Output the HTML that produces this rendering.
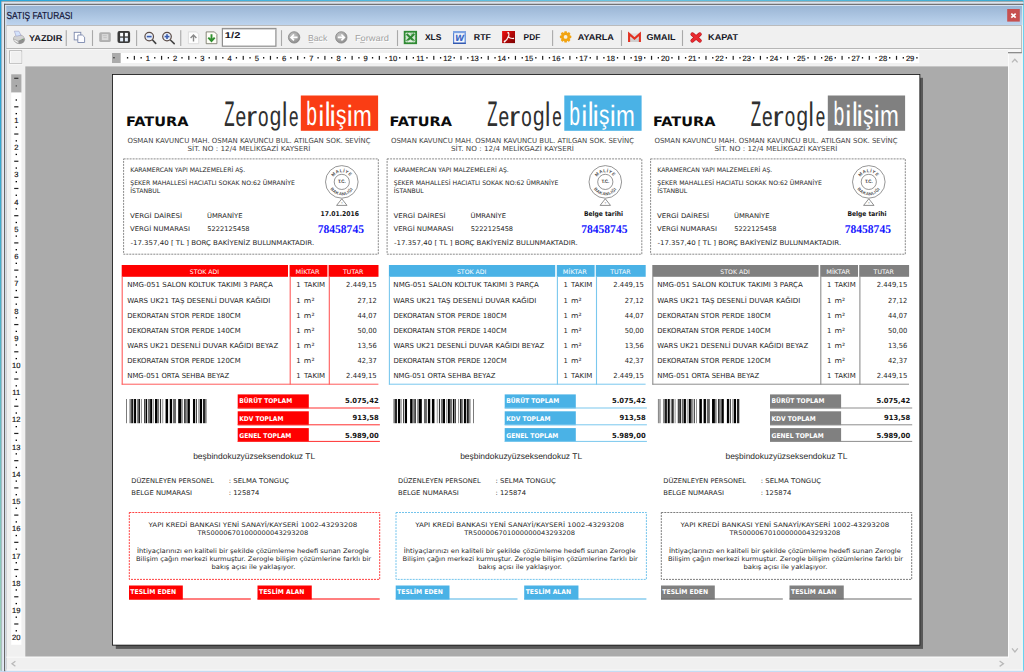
<!DOCTYPE html>
<html lang="tr"><head><meta charset="utf-8"><title>SATIŞ FATURASI</title>
<style>html,body{margin:0;padding:0;background:#f0f0f0;overflow:hidden}body{width:1024px;height:672px}svg text{white-space:pre;text-rendering:geometricPrecision}</style>
</head><body>
<svg width="1024" height="672" viewBox="0 0 1024 672" style="display:block">
<defs>
<linearGradient id="gt" x1="0" y1="0" x2="0" y2="1"><stop offset="0" stop-color="#9ab5d4"/><stop offset="1" stop-color="#bdd4ee"/></linearGradient>
<linearGradient id="gl" x1="0" y1="0" x2="0" y2="1"><stop offset="0" stop-color="#1e9fd8"/><stop offset="0.5" stop-color="#4fb3c8"/><stop offset="1" stop-color="#a6d4b6"/></linearGradient>
<linearGradient id="gtop" x1="0" y1="0" x2="1" y2="0"><stop offset="0" stop-color="#2aa6da"/><stop offset="0.6" stop-color="#6cc4e0"/><stop offset="1" stop-color="#3aa8d0"/></linearGradient>
<radialGradient id="gnav" cx="0.4" cy="0.35" r="0.7"><stop offset="0" stop-color="#c8c8c8"/><stop offset="1" stop-color="#8a8a8a"/></radialGradient>
<linearGradient id="gpdf" x1="0" y1="0" x2="1" y2="1"><stop offset="0" stop-color="#f01010"/><stop offset="1" stop-color="#7a0000"/></linearGradient>
</defs>
<rect x="0.00" y="0.00" width="1024.00" height="672.00" fill="#f0f0f0" />
<rect x="0.00" y="0.00" width="1024.00" height="1.40" fill="url(#gtop)" />
<rect x="0.00" y="0.00" width="1.60" height="672.00" fill="url(#gl)" />
<rect x="1022.80" y="0.00" width="1.20" height="672.00" fill="#68d2ef" />
<rect x="0.00" y="670.50" width="1024.00" height="1.50" fill="#c4dcf4" />
<rect x="1.60" y="1.30" width="1021.80" height="0.80" fill="#9a9a9a" />
<rect x="1.60" y="2.10" width="1021.80" height="1.70" fill="#dbe4ef" />
<rect x="1.60" y="2.10" width="2.60" height="668.90" fill="#e3eaf4" />
<rect x="4.10" y="3.80" width="1019.30" height="1.10" fill="#565656" />
<rect x="4.10" y="3.80" width="1.20" height="667.40" fill="#565656" />
<rect x="5.30" y="4.90" width="1017.30" height="1.10" fill="#e4edf8" />
<rect x="5.30" y="4.90" width="1.10" height="665.60" fill="#dde8f6" />
<rect x="6.40" y="25.80" width="0.60" height="644.70" fill="#c4c4c4" />
<rect x="1.50" y="1.30" width="0.60" height="669.70" fill="#8f9aa6" />
<rect x="6.20" y="5.80" width="1015.80" height="19.40" fill="url(#gt)" />
<rect x="6.20" y="25.00" width="1015.80" height="0.80" fill="#b0b0b0" />
<text x="6.54" y="18.90" font-size="10.2" fill="#14173a" font-family="Liberation Sans, sans-serif" font-weight="normal" textLength="66.13" lengthAdjust="spacingAndGlyphs" stroke="#14173a" stroke-width="0.2">SATIŞ FATURASI</text>
<rect x="1007.20" y="9.00" width="12.60" height="12.60" fill="#c75050" />
<path d="M1011.3 13.6 L1015.7 17.6 M1015.7 13.6 L1011.3 17.6" stroke="#fff" stroke-width="1.7" fill="none"/>
<rect x="6.30" y="48.00" width="1015.50" height="0.90" fill="#a6a6a6" />
<rect x="6.30" y="48.90" width="1001.70" height="0.80" fill="#fbfbfb" />
<rect x="1021.00" y="25.80" width="0.90" height="27.20" fill="#a6a6a6" />
<rect x="65.70" y="30.20" width="1.10" height="15.80" fill="#a9a9a9" />
<rect x="91.95" y="30.20" width="1.10" height="15.80" fill="#a9a9a9" />
<rect x="136.05" y="30.20" width="1.10" height="15.80" fill="#a9a9a9" />
<rect x="180.20" y="30.20" width="1.10" height="15.80" fill="#a9a9a9" />
<rect x="280.95" y="30.20" width="1.10" height="15.80" fill="#a9a9a9" />
<rect x="396.95" y="30.20" width="1.10" height="15.80" fill="#a9a9a9" />
<rect x="552.05" y="30.20" width="1.10" height="15.80" fill="#a9a9a9" />
<rect x="620.95" y="30.20" width="1.10" height="15.80" fill="#a9a9a9" />
<rect x="681.95" y="30.20" width="1.10" height="15.80" fill="#a9a9a9" />
<text x="29.06" y="40.90" font-size="8.5" fill="#15151f" font-family="Liberation Sans, sans-serif" font-weight="bold" textLength="33.20" lengthAdjust="spacingAndGlyphs" >YAZDIR</text>
<text x="308.76" y="41.90" font-size="8.6" fill="#ffffff" font-family="Liberation Sans, sans-serif" font-weight="normal" textLength="19.27" lengthAdjust="spacingAndGlyphs" >Back</text>
<text x="307.96" y="41.10" font-size="8.6" fill="#a2a2a2" font-family="Liberation Sans, sans-serif" font-weight="normal" textLength="19.27" lengthAdjust="spacingAndGlyphs" >Back</text>
<text x="355.76" y="41.90" font-size="8.6" fill="#ffffff" font-family="Liberation Sans, sans-serif" font-weight="normal" textLength="34.02" lengthAdjust="spacingAndGlyphs" >Forward</text>
<text x="354.96" y="41.10" font-size="8.6" fill="#a2a2a2" font-family="Liberation Sans, sans-serif" font-weight="normal" textLength="34.02" lengthAdjust="spacingAndGlyphs" >Forward</text>
<rect x="308.80" y="42.20" width="4.40" height="0.70" fill="#a8a8a8" />
<rect x="360.00" y="42.20" width="4.60" height="0.70" fill="#a8a8a8" />
<text x="424.96" y="40.00" font-size="8.5" fill="#15151f" font-family="Liberation Sans, sans-serif" font-weight="bold" textLength="16.50" lengthAdjust="spacingAndGlyphs" >XLS</text>
<text x="473.86" y="40.00" font-size="8.5" fill="#15151f" font-family="Liberation Sans, sans-serif" font-weight="bold" textLength="17.10" lengthAdjust="spacingAndGlyphs" >RTF</text>
<text x="523.61" y="40.00" font-size="8.5" fill="#15151f" font-family="Liberation Sans, sans-serif" font-weight="bold" textLength="16.61" lengthAdjust="spacingAndGlyphs" >PDF</text>
<text x="577.76" y="40.00" font-size="8.5" fill="#15151f" font-family="Liberation Sans, sans-serif" font-weight="bold" textLength="36.11" lengthAdjust="spacingAndGlyphs" >AYARLA</text>
<text x="646.61" y="40.00" font-size="8.5" fill="#15151f" font-family="Liberation Sans, sans-serif" font-weight="bold" textLength="28.86" lengthAdjust="spacingAndGlyphs" >GMAIL</text>
<text x="708.11" y="40.00" font-size="8.5" fill="#15151f" font-family="Liberation Sans, sans-serif" font-weight="bold" textLength="29.86" lengthAdjust="spacingAndGlyphs" >KAPAT</text>
<g id="icons">
<!-- printer -->
<path d="M13.4 39 Q13.3 36.6 16.2 35.6 L21 35 Q24.4 36.4 24.7 39.4 Q24.8 42 22 43.2 Q19 44.2 16.8 43.2 Q13.6 41.8 13.4 39 Z" fill="#b2b2b2" stroke="#8e8e8e" stroke-width="0.5"/>
<path d="M13.6 38.6 Q14 36.4 16.4 35.7 L20.8 35.2 Q23.6 36.2 24.2 38.2 L18.6 40.8 Z" fill="#d2d2d2"/>
<path d="M18.6 40.8 L24.2 38.2 Q25 41.4 22 43.1 Q20 43.9 18.6 43.6 Z" fill="#8f8f8f"/>
<path d="M14.2 39.6 L18.2 41.9 L18.2 43 L14.6 41 Z" fill="#f6f6f6"/>
<path d="M14.3 31.2 L18.9 31.2 L21 35.3 L16.2 36.2 Z" fill="#d3e2fb" stroke="#9c9cc4" stroke-width="0.55"/>
<rect x="21.9" y="38.9" width="0.9" height="0.9" fill="#58b04c"/>
<!-- copy -->
<rect x="74.2" y="32.3" width="6.6" height="7.6" fill="#fff" stroke="#7b88ad" stroke-width="0.9"/>
<path d="M77.8 35 L82.4 35 L84.6 37.2 L84.6 42.5 L77.8 42.5 Z" fill="#fcfcff" stroke="#7b88ad" stroke-width="0.9"/>
<!-- gray page -->
<rect x="99.2" y="32.2" width="11.6" height="9.9" rx="1.6" fill="#b0b0b0"/>
<rect x="101.8" y="34.1" width="6.6" height="6" fill="#dadada"/>
<rect x="102.6" y="35.4" width="4.2" height="0.7" fill="#b8b8b8"/><rect x="103.4" y="37.4" width="3.4" height="0.7" fill="#b8b8b8"/>
<!-- grid -->
<rect x="117.5" y="31.1" width="12.6" height="11.9" rx="1.9" fill="#3a3a3a"/>
<rect x="120.1" y="32.9" width="3" height="3.5" fill="#fbfdff"/><rect x="124.9" y="32.9" width="3" height="3.5" fill="#fbfdff"/>
<rect x="120.1" y="37.7" width="3" height="3.7" fill="#e4eefa"/><rect x="124.9" y="37.7" width="3" height="3.7" fill="#e4eefa"/>
<!-- zoom out -->
<path d="M152.6 40 L155.7 43.4" stroke="#444" stroke-width="1.6" stroke-linecap="round"/>
<circle cx="149.2" cy="36.6" r="4.3" fill="#e6eefa" stroke="#5c4c46" stroke-width="1.2"/>
<rect x="146.8" y="35.8" width="4.8" height="1.6" fill="#3a5cae"/>
<!-- zoom in -->
<path d="M170.4 40 L174.2 43.6" stroke="#444" stroke-width="1.6" stroke-linecap="round"/>
<circle cx="167" cy="36.6" r="4.3" fill="#e6eefa" stroke="#5c4c46" stroke-width="1.2"/>
<rect x="164.6" y="35.8" width="4.8" height="1.6" fill="#3a5cae"/><rect x="166.2" y="34.2" width="1.6" height="4.8" fill="#3a5cae"/>
<!-- page up -->
<path d="M188.4 31.9 L196.4 31.9 L198.7 34.2 L198.7 43.7 L188.4 43.7 Z" fill="#fdfdfd" stroke="#d2d2d2" stroke-width="0.7"/>
<path d="M193.5 41.6 L193.5 35.2 M190.6 38 L193.5 35 L196.4 38" fill="none" stroke="#8a8a8a" stroke-width="1.4"/>
<!-- page down -->
<path d="M206.2 31.9 L214.4 31.9 L216.9 34.4 L216.9 43.7 L206.2 43.7 Z" fill="#fdfdf6" stroke="#6d6d5e" stroke-width="0.8"/>
<path d="M211.5 34.3 L211.5 40.6 M208.3 37.6 L211.5 41 L214.7 37.6" fill="none" stroke="#2f8f2f" stroke-width="1.9"/>
<!-- back / forward -->
<circle cx="294.1" cy="37.4" r="5.7" fill="url(#gnav)" stroke="#858585" stroke-width="0.8"/>
<path d="M297.6 37.4 L291.2 37.4 M294 34.5 L291 37.4 L294 40.3" fill="none" stroke="#fff" stroke-width="1.6"/>
<circle cx="341.3" cy="37.4" r="5.7" fill="url(#gnav)" stroke="#858585" stroke-width="0.8"/>
<path d="M337.8 37.4 L344.2 37.4 M341.4 34.5 L344.4 37.4 L341.4 40.3" fill="none" stroke="#fff" stroke-width="1.6"/>
<!-- excel -->
<rect x="404.7" y="31.8" width="11.4" height="11.4" fill="#cfe5cf" stroke="#2f8a33" stroke-width="1.9"/>
<rect x="405.9" y="33" width="9" height="9" fill="none" stroke="#e8f3e8" stroke-width="0.6" stroke-dasharray="0.8 0.8"/>
<path d="M406.6 34 L414.2 41.2 M414.2 34 L406.6 41.2" stroke="#2f8a33" stroke-width="2.1"/>
<rect x="410.8" y="33.6" width="4" height="1.1" fill="#2f8a33" opacity=".55"/><rect x="406.4" y="40.6" width="8" height="1.1" fill="#eaf4ea" opacity=".9"/>
<!-- word -->
<rect x="453.6" y="31.6" width="11.6" height="11.8" fill="#f4f7fd" stroke="#5a86d6" stroke-width="1.2"/>
<rect x="453" y="31" width="12.8" height="2.2" fill="#7ea3e2"/>
<rect x="453" y="42.6" width="12.8" height="1.3" fill="#2f55ad"/>
<text x="459.6" y="41.3" font-size="8.6" font-style="italic" font-weight="bold" fill="#3d68c4" font-family="DejaVu Sans, Liberation Sans, sans-serif" text-anchor="middle" textLength="9.2" lengthAdjust="spacingAndGlyphs">W</text>
<!-- pdf -->
<rect x="502.1" y="31" width="12.9" height="12.1" fill="url(#gpdf)"/>
<path d="M508.2 32.6 Q509.4 33.4 508.6 36 Q507.6 39.4 504.4 41.8 M508.4 36.6 Q510 39 513.6 38.4" fill="none" stroke="#fff" stroke-width="1.15" stroke-linecap="round" opacity=".92"/>
<circle cx="504.6" cy="41.4" r="0.9" fill="#fff" opacity=".85"/>
<circle cx="508.1" cy="32.9" r="0.8" fill="#fff" opacity=".8"/>
<circle cx="513.2" cy="38.5" r="0.8" fill="#fff" opacity=".8"/>
<!-- gear -->
<g transform="translate(565.6 36.9)">
<circle r="4.5" fill="#f2a412"/>
<g fill="#f2a412"><rect x="-1.3" y="-5.7" width="2.6" height="11.4" rx="0.6"/><rect x="-1.3" y="-5.7" width="2.6" height="11.4" rx="0.6" transform="rotate(45)"/><rect x="-1.3" y="-5.7" width="2.6" height="11.4" rx="0.6" transform="rotate(90)"/><rect x="-1.3" y="-5.7" width="2.6" height="11.4" rx="0.6" transform="rotate(135)"/></g>
<circle r="1.9" fill="#f6efe0"/>
</g>
<!-- gmail -->
<rect x="628.6" y="33.4" width="11.8" height="8.6" fill="#dedede"/>
<rect x="629.6" y="38.5" width="9.8" height="3.5" fill="#cfcfcf"/>
<path d="M629.1 42 L629.1 33.9 L634.5 38.6 L639.9 33.9 L639.9 42" fill="none" stroke="#e23222" stroke-width="2.1" stroke-linejoin="miter"/>
<!-- red X -->
<path d="M692.4 34.2 L699.8 40.6 M699.8 34.2 L692.4 40.6" stroke="#b3181e" stroke-width="3.9" stroke-linecap="round"/>
<path d="M692.4 34.2 L699.8 40.6 M699.8 34.2 L692.4 40.6" stroke="#ea2a30" stroke-width="2.8" stroke-linecap="round"/>
</g>

<rect x="222.40" y="28.50" width="53.50" height="17.70" fill="#ffffff" stroke="#8f8f8f" stroke-width="1.2"/>
<rect x="222.90" y="28.90" width="52.50" height="0.80" fill="#c9c9c9" />
<text x="224.86" y="38.30" font-size="8.5" fill="#15151f" font-family="Liberation Sans, sans-serif" font-weight="bold" textLength="15.50" lengthAdjust="spacingAndGlyphs" >1/2</text>
<rect x="9.10" y="50.30" width="13.00" height="13.50" fill="#adadad" />
<rect x="9.90" y="51.10" width="11.50" height="11.90" fill="#fdfdfd" />
<rect x="10.70" y="51.90" width="10.70" height="11.10" fill="#f0f0f0" />
<rect x="9.10" y="63.80" width="13.50" height="0.80" fill="#fbfbfb" />
<rect x="112.00" y="53.00" width="8.80" height="10.00" fill="#ababab" />
<rect x="120.80" y="53.00" width="798.40" height="10.00" fill="#ffffff" />
<rect x="113.00" y="57.20" width="1.90" height="1.10" fill="#444" />
<rect x="126.91" y="57.10" width="1.30" height="1.40" fill="#000" />
<rect x="133.76" y="55.90" width="1.20" height="3.90" fill="#222" />
<rect x="140.51" y="57.10" width="1.30" height="1.40" fill="#000" />
<text x="147.97" y="60.7" font-size="7.6" fill="#101010" stroke="#101010" stroke-width="0.15" font-family="Liberation Sans, sans-serif" text-anchor="middle">1</text>
<rect x="154.12" y="57.10" width="1.30" height="1.40" fill="#000" />
<rect x="160.98" y="55.90" width="1.20" height="3.90" fill="#222" />
<rect x="167.73" y="57.10" width="1.30" height="1.40" fill="#000" />
<text x="175.19" y="60.7" font-size="7.6" fill="#101010" stroke="#101010" stroke-width="0.15" font-family="Liberation Sans, sans-serif" text-anchor="middle">2</text>
<rect x="181.34" y="57.10" width="1.30" height="1.40" fill="#000" />
<rect x="188.20" y="55.90" width="1.20" height="3.90" fill="#222" />
<rect x="194.95" y="57.10" width="1.30" height="1.40" fill="#000" />
<text x="202.41" y="60.7" font-size="7.6" fill="#101010" stroke="#101010" stroke-width="0.15" font-family="Liberation Sans, sans-serif" text-anchor="middle">3</text>
<rect x="208.56" y="57.10" width="1.30" height="1.40" fill="#000" />
<rect x="215.42" y="55.90" width="1.20" height="3.90" fill="#222" />
<rect x="222.17" y="57.10" width="1.30" height="1.40" fill="#000" />
<text x="229.63" y="60.7" font-size="7.6" fill="#101010" stroke="#101010" stroke-width="0.15" font-family="Liberation Sans, sans-serif" text-anchor="middle">4</text>
<rect x="235.78" y="57.10" width="1.30" height="1.40" fill="#000" />
<rect x="242.64" y="55.90" width="1.20" height="3.90" fill="#222" />
<rect x="249.39" y="57.10" width="1.30" height="1.40" fill="#000" />
<text x="256.85" y="60.7" font-size="7.6" fill="#101010" stroke="#101010" stroke-width="0.15" font-family="Liberation Sans, sans-serif" text-anchor="middle">5</text>
<rect x="263.01" y="57.10" width="1.30" height="1.40" fill="#000" />
<rect x="269.86" y="55.90" width="1.20" height="3.90" fill="#222" />
<rect x="276.62" y="57.10" width="1.30" height="1.40" fill="#000" />
<text x="284.07" y="60.7" font-size="7.6" fill="#101010" stroke="#101010" stroke-width="0.15" font-family="Liberation Sans, sans-serif" text-anchor="middle">6</text>
<rect x="290.23" y="57.10" width="1.30" height="1.40" fill="#000" />
<rect x="297.08" y="55.90" width="1.20" height="3.90" fill="#222" />
<rect x="303.84" y="57.10" width="1.30" height="1.40" fill="#000" />
<text x="311.29" y="60.7" font-size="7.6" fill="#101010" stroke="#101010" stroke-width="0.15" font-family="Liberation Sans, sans-serif" text-anchor="middle">7</text>
<rect x="317.44" y="57.10" width="1.30" height="1.40" fill="#000" />
<rect x="324.30" y="55.90" width="1.20" height="3.90" fill="#222" />
<rect x="331.06" y="57.10" width="1.30" height="1.40" fill="#000" />
<text x="338.51" y="60.7" font-size="7.6" fill="#101010" stroke="#101010" stroke-width="0.15" font-family="Liberation Sans, sans-serif" text-anchor="middle">8</text>
<rect x="344.67" y="57.10" width="1.30" height="1.40" fill="#000" />
<rect x="351.52" y="55.90" width="1.20" height="3.90" fill="#222" />
<rect x="358.28" y="57.10" width="1.30" height="1.40" fill="#000" />
<text x="365.73" y="60.7" font-size="7.6" fill="#101010" stroke="#101010" stroke-width="0.15" font-family="Liberation Sans, sans-serif" text-anchor="middle">9</text>
<rect x="371.89" y="57.10" width="1.30" height="1.40" fill="#000" />
<rect x="378.74" y="55.90" width="1.20" height="3.90" fill="#222" />
<rect x="385.50" y="57.10" width="1.30" height="1.40" fill="#000" />
<text x="392.95" y="60.7" font-size="7.6" fill="#101010" stroke="#101010" stroke-width="0.15" font-family="Liberation Sans, sans-serif" text-anchor="middle">10</text>
<rect x="399.11" y="57.10" width="1.30" height="1.40" fill="#000" />
<rect x="405.96" y="55.90" width="1.20" height="3.90" fill="#222" />
<rect x="412.72" y="57.10" width="1.30" height="1.40" fill="#000" />
<text x="420.17" y="60.7" font-size="7.6" fill="#101010" stroke="#101010" stroke-width="0.15" font-family="Liberation Sans, sans-serif" text-anchor="middle">11</text>
<rect x="426.32" y="57.10" width="1.30" height="1.40" fill="#000" />
<rect x="433.18" y="55.90" width="1.20" height="3.90" fill="#222" />
<rect x="439.94" y="57.10" width="1.30" height="1.40" fill="#000" />
<text x="447.39" y="60.7" font-size="7.6" fill="#101010" stroke="#101010" stroke-width="0.15" font-family="Liberation Sans, sans-serif" text-anchor="middle">12</text>
<rect x="453.55" y="57.10" width="1.30" height="1.40" fill="#000" />
<rect x="460.40" y="55.90" width="1.20" height="3.90" fill="#222" />
<rect x="467.16" y="57.10" width="1.30" height="1.40" fill="#000" />
<text x="474.61" y="60.7" font-size="7.6" fill="#101010" stroke="#101010" stroke-width="0.15" font-family="Liberation Sans, sans-serif" text-anchor="middle">13</text>
<rect x="480.77" y="57.10" width="1.30" height="1.40" fill="#000" />
<rect x="487.62" y="55.90" width="1.20" height="3.90" fill="#222" />
<rect x="494.38" y="57.10" width="1.30" height="1.40" fill="#000" />
<text x="501.83" y="60.7" font-size="7.6" fill="#101010" stroke="#101010" stroke-width="0.15" font-family="Liberation Sans, sans-serif" text-anchor="middle">14</text>
<rect x="507.99" y="57.10" width="1.30" height="1.40" fill="#000" />
<rect x="514.84" y="55.90" width="1.20" height="3.90" fill="#222" />
<rect x="521.60" y="57.10" width="1.30" height="1.40" fill="#000" />
<text x="529.05" y="60.7" font-size="7.6" fill="#101010" stroke="#101010" stroke-width="0.15" font-family="Liberation Sans, sans-serif" text-anchor="middle">15</text>
<rect x="535.20" y="57.10" width="1.30" height="1.40" fill="#000" />
<rect x="542.06" y="55.90" width="1.20" height="3.90" fill="#222" />
<rect x="548.81" y="57.10" width="1.30" height="1.40" fill="#000" />
<text x="556.27" y="60.7" font-size="7.6" fill="#101010" stroke="#101010" stroke-width="0.15" font-family="Liberation Sans, sans-serif" text-anchor="middle">16</text>
<rect x="562.42" y="57.10" width="1.30" height="1.40" fill="#000" />
<rect x="569.28" y="55.90" width="1.20" height="3.90" fill="#222" />
<rect x="576.03" y="57.10" width="1.30" height="1.40" fill="#000" />
<text x="583.49" y="60.7" font-size="7.6" fill="#101010" stroke="#101010" stroke-width="0.15" font-family="Liberation Sans, sans-serif" text-anchor="middle">17</text>
<rect x="589.64" y="57.10" width="1.30" height="1.40" fill="#000" />
<rect x="596.50" y="55.90" width="1.20" height="3.90" fill="#222" />
<rect x="603.25" y="57.10" width="1.30" height="1.40" fill="#000" />
<text x="610.71" y="60.7" font-size="7.6" fill="#101010" stroke="#101010" stroke-width="0.15" font-family="Liberation Sans, sans-serif" text-anchor="middle">18</text>
<rect x="616.87" y="57.10" width="1.30" height="1.40" fill="#000" />
<rect x="623.72" y="55.90" width="1.20" height="3.90" fill="#222" />
<rect x="630.48" y="57.10" width="1.30" height="1.40" fill="#000" />
<text x="637.93" y="60.7" font-size="7.6" fill="#101010" stroke="#101010" stroke-width="0.15" font-family="Liberation Sans, sans-serif" text-anchor="middle">19</text>
<rect x="644.08" y="57.10" width="1.30" height="1.40" fill="#000" />
<rect x="650.94" y="55.90" width="1.20" height="3.90" fill="#222" />
<rect x="657.69" y="57.10" width="1.30" height="1.40" fill="#000" />
<text x="665.15" y="60.7" font-size="7.6" fill="#101010" stroke="#101010" stroke-width="0.15" font-family="Liberation Sans, sans-serif" text-anchor="middle">20</text>
<rect x="671.30" y="57.10" width="1.30" height="1.40" fill="#000" />
<rect x="678.16" y="55.90" width="1.20" height="3.90" fill="#222" />
<rect x="684.91" y="57.10" width="1.30" height="1.40" fill="#000" />
<text x="692.37" y="60.7" font-size="7.6" fill="#101010" stroke="#101010" stroke-width="0.15" font-family="Liberation Sans, sans-serif" text-anchor="middle">21</text>
<rect x="698.52" y="57.10" width="1.30" height="1.40" fill="#000" />
<rect x="705.38" y="55.90" width="1.20" height="3.90" fill="#222" />
<rect x="712.13" y="57.10" width="1.30" height="1.40" fill="#000" />
<text x="719.59" y="60.7" font-size="7.6" fill="#101010" stroke="#101010" stroke-width="0.15" font-family="Liberation Sans, sans-serif" text-anchor="middle">22</text>
<rect x="725.74" y="57.10" width="1.30" height="1.40" fill="#000" />
<rect x="732.60" y="55.90" width="1.20" height="3.90" fill="#222" />
<rect x="739.35" y="57.10" width="1.30" height="1.40" fill="#000" />
<text x="746.81" y="60.7" font-size="7.6" fill="#101010" stroke="#101010" stroke-width="0.15" font-family="Liberation Sans, sans-serif" text-anchor="middle">23</text>
<rect x="752.96" y="57.10" width="1.30" height="1.40" fill="#000" />
<rect x="759.82" y="55.90" width="1.20" height="3.90" fill="#222" />
<rect x="766.57" y="57.10" width="1.30" height="1.40" fill="#000" />
<text x="774.03" y="60.7" font-size="7.6" fill="#101010" stroke="#101010" stroke-width="0.15" font-family="Liberation Sans, sans-serif" text-anchor="middle">24</text>
<rect x="780.18" y="57.10" width="1.30" height="1.40" fill="#000" />
<rect x="787.04" y="55.90" width="1.20" height="3.90" fill="#222" />
<rect x="793.79" y="57.10" width="1.30" height="1.40" fill="#000" />
<text x="801.25" y="60.7" font-size="7.6" fill="#101010" stroke="#101010" stroke-width="0.15" font-family="Liberation Sans, sans-serif" text-anchor="middle">25</text>
<rect x="807.40" y="57.10" width="1.30" height="1.40" fill="#000" />
<rect x="814.26" y="55.90" width="1.20" height="3.90" fill="#222" />
<rect x="821.01" y="57.10" width="1.30" height="1.40" fill="#000" />
<text x="828.47" y="60.7" font-size="7.6" fill="#101010" stroke="#101010" stroke-width="0.15" font-family="Liberation Sans, sans-serif" text-anchor="middle">26</text>
<rect x="834.62" y="57.10" width="1.30" height="1.40" fill="#000" />
<rect x="841.48" y="55.90" width="1.20" height="3.90" fill="#222" />
<rect x="848.24" y="57.10" width="1.30" height="1.40" fill="#000" />
<text x="855.69" y="60.7" font-size="7.6" fill="#101010" stroke="#101010" stroke-width="0.15" font-family="Liberation Sans, sans-serif" text-anchor="middle">27</text>
<rect x="861.84" y="57.10" width="1.30" height="1.40" fill="#000" />
<rect x="868.70" y="55.90" width="1.20" height="3.90" fill="#222" />
<rect x="875.45" y="57.10" width="1.30" height="1.40" fill="#000" />
<text x="882.91" y="60.7" font-size="7.6" fill="#101010" stroke="#101010" stroke-width="0.15" font-family="Liberation Sans, sans-serif" text-anchor="middle">28</text>
<rect x="889.06" y="57.10" width="1.30" height="1.40" fill="#000" />
<rect x="895.92" y="55.90" width="1.20" height="3.90" fill="#222" />
<rect x="902.67" y="57.10" width="1.30" height="1.40" fill="#000" />
<text x="910.13" y="60.7" font-size="7.6" fill="#101010" stroke="#101010" stroke-width="0.15" font-family="Liberation Sans, sans-serif" text-anchor="middle">29</text>
<rect x="916.28" y="57.10" width="1.30" height="1.40" fill="#000" />
<rect x="11.20" y="74.30" width="10.20" height="18.30" fill="#ababab" />
<rect x="11.20" y="92.60" width="10.20" height="552.20" fill="#ffffff" />
<rect x="14.20" y="77.70" width="4.20" height="1.20" fill="#333" />
<rect x="15.70" y="85.30" width="1.20" height="1.20" fill="#444" />
<rect x="15.60" y="99.35" width="1.40" height="1.30" fill="#000" />
<rect x="14.20" y="106.21" width="4.20" height="1.20" fill="#222" />
<rect x="15.60" y="112.97" width="1.40" height="1.30" fill="#000" />
<text x="16.3" y="123.02" font-size="7.6" fill="#101010" stroke="#101010" stroke-width="0.15" font-family="Liberation Sans, sans-serif" text-anchor="middle">1</text>
<rect x="15.60" y="126.57" width="1.40" height="1.30" fill="#000" />
<rect x="14.20" y="133.43" width="4.20" height="1.20" fill="#222" />
<rect x="15.60" y="140.19" width="1.40" height="1.30" fill="#000" />
<text x="16.3" y="150.24" font-size="7.6" fill="#101010" stroke="#101010" stroke-width="0.15" font-family="Liberation Sans, sans-serif" text-anchor="middle">2</text>
<rect x="15.60" y="153.79" width="1.40" height="1.30" fill="#000" />
<rect x="14.20" y="160.65" width="4.20" height="1.20" fill="#222" />
<rect x="15.60" y="167.40" width="1.40" height="1.30" fill="#000" />
<text x="16.3" y="177.46" font-size="7.6" fill="#101010" stroke="#101010" stroke-width="0.15" font-family="Liberation Sans, sans-serif" text-anchor="middle">3</text>
<rect x="15.60" y="181.02" width="1.40" height="1.30" fill="#000" />
<rect x="14.20" y="187.87" width="4.20" height="1.20" fill="#222" />
<rect x="15.60" y="194.62" width="1.40" height="1.30" fill="#000" />
<text x="16.3" y="204.68" font-size="7.6" fill="#101010" stroke="#101010" stroke-width="0.15" font-family="Liberation Sans, sans-serif" text-anchor="middle">4</text>
<rect x="15.60" y="208.23" width="1.40" height="1.30" fill="#000" />
<rect x="14.20" y="215.09" width="4.20" height="1.20" fill="#222" />
<rect x="15.60" y="221.84" width="1.40" height="1.30" fill="#000" />
<text x="16.3" y="231.90" font-size="7.6" fill="#101010" stroke="#101010" stroke-width="0.15" font-family="Liberation Sans, sans-serif" text-anchor="middle">5</text>
<rect x="15.60" y="235.46" width="1.40" height="1.30" fill="#000" />
<rect x="14.20" y="242.31" width="4.20" height="1.20" fill="#222" />
<rect x="15.60" y="249.06" width="1.40" height="1.30" fill="#000" />
<text x="16.3" y="259.12" font-size="7.6" fill="#101010" stroke="#101010" stroke-width="0.15" font-family="Liberation Sans, sans-serif" text-anchor="middle">6</text>
<rect x="15.60" y="262.68" width="1.40" height="1.30" fill="#000" />
<rect x="14.20" y="269.53" width="4.20" height="1.20" fill="#222" />
<rect x="15.60" y="276.29" width="1.40" height="1.30" fill="#000" />
<text x="16.3" y="286.34" font-size="7.6" fill="#101010" stroke="#101010" stroke-width="0.15" font-family="Liberation Sans, sans-serif" text-anchor="middle">7</text>
<rect x="15.60" y="289.90" width="1.40" height="1.30" fill="#000" />
<rect x="14.20" y="296.75" width="4.20" height="1.20" fill="#222" />
<rect x="15.60" y="303.51" width="1.40" height="1.30" fill="#000" />
<text x="16.3" y="313.56" font-size="7.6" fill="#101010" stroke="#101010" stroke-width="0.15" font-family="Liberation Sans, sans-serif" text-anchor="middle">8</text>
<rect x="15.60" y="317.12" width="1.40" height="1.30" fill="#000" />
<rect x="14.20" y="323.97" width="4.20" height="1.20" fill="#222" />
<rect x="15.60" y="330.73" width="1.40" height="1.30" fill="#000" />
<text x="16.3" y="340.78" font-size="7.6" fill="#101010" stroke="#101010" stroke-width="0.15" font-family="Liberation Sans, sans-serif" text-anchor="middle">9</text>
<rect x="15.60" y="344.34" width="1.40" height="1.30" fill="#000" />
<rect x="14.20" y="351.19" width="4.20" height="1.20" fill="#222" />
<rect x="15.60" y="357.95" width="1.40" height="1.30" fill="#000" />
<text x="16.3" y="368.00" font-size="7.6" fill="#101010" stroke="#101010" stroke-width="0.15" font-family="Liberation Sans, sans-serif" text-anchor="middle">10</text>
<rect x="15.60" y="371.56" width="1.40" height="1.30" fill="#000" />
<rect x="14.20" y="378.41" width="4.20" height="1.20" fill="#222" />
<rect x="15.60" y="385.17" width="1.40" height="1.30" fill="#000" />
<text x="16.3" y="395.22" font-size="7.6" fill="#101010" stroke="#101010" stroke-width="0.15" font-family="Liberation Sans, sans-serif" text-anchor="middle">11</text>
<rect x="15.60" y="398.77" width="1.40" height="1.30" fill="#000" />
<rect x="14.20" y="405.63" width="4.20" height="1.20" fill="#222" />
<rect x="15.60" y="412.38" width="1.40" height="1.30" fill="#000" />
<text x="16.3" y="422.44" font-size="7.6" fill="#101010" stroke="#101010" stroke-width="0.15" font-family="Liberation Sans, sans-serif" text-anchor="middle">12</text>
<rect x="15.60" y="426.00" width="1.40" height="1.30" fill="#000" />
<rect x="14.20" y="432.85" width="4.20" height="1.20" fill="#222" />
<rect x="15.60" y="439.61" width="1.40" height="1.30" fill="#000" />
<text x="16.3" y="449.66" font-size="7.6" fill="#101010" stroke="#101010" stroke-width="0.15" font-family="Liberation Sans, sans-serif" text-anchor="middle">13</text>
<rect x="15.60" y="453.22" width="1.40" height="1.30" fill="#000" />
<rect x="14.20" y="460.07" width="4.20" height="1.20" fill="#222" />
<rect x="15.60" y="466.83" width="1.40" height="1.30" fill="#000" />
<text x="16.3" y="476.88" font-size="7.6" fill="#101010" stroke="#101010" stroke-width="0.15" font-family="Liberation Sans, sans-serif" text-anchor="middle">14</text>
<rect x="15.60" y="480.44" width="1.40" height="1.30" fill="#000" />
<rect x="14.20" y="487.29" width="4.20" height="1.20" fill="#222" />
<rect x="15.60" y="494.05" width="1.40" height="1.30" fill="#000" />
<text x="16.3" y="504.10" font-size="7.6" fill="#101010" stroke="#101010" stroke-width="0.15" font-family="Liberation Sans, sans-serif" text-anchor="middle">15</text>
<rect x="15.60" y="507.65" width="1.40" height="1.30" fill="#000" />
<rect x="14.20" y="514.51" width="4.20" height="1.20" fill="#222" />
<rect x="15.60" y="521.26" width="1.40" height="1.30" fill="#000" />
<text x="16.3" y="531.32" font-size="7.6" fill="#101010" stroke="#101010" stroke-width="0.15" font-family="Liberation Sans, sans-serif" text-anchor="middle">16</text>
<rect x="15.60" y="534.88" width="1.40" height="1.30" fill="#000" />
<rect x="14.20" y="541.73" width="4.20" height="1.20" fill="#222" />
<rect x="15.60" y="548.49" width="1.40" height="1.30" fill="#000" />
<text x="16.3" y="558.54" font-size="7.6" fill="#101010" stroke="#101010" stroke-width="0.15" font-family="Liberation Sans, sans-serif" text-anchor="middle">17</text>
<rect x="15.60" y="562.10" width="1.40" height="1.30" fill="#000" />
<rect x="14.20" y="568.95" width="4.20" height="1.20" fill="#222" />
<rect x="15.60" y="575.71" width="1.40" height="1.30" fill="#000" />
<text x="16.3" y="585.76" font-size="7.6" fill="#101010" stroke="#101010" stroke-width="0.15" font-family="Liberation Sans, sans-serif" text-anchor="middle">18</text>
<rect x="15.60" y="589.31" width="1.40" height="1.30" fill="#000" />
<rect x="14.20" y="596.17" width="4.20" height="1.20" fill="#222" />
<rect x="15.60" y="602.92" width="1.40" height="1.30" fill="#000" />
<text x="16.3" y="612.98" font-size="7.6" fill="#101010" stroke="#101010" stroke-width="0.15" font-family="Liberation Sans, sans-serif" text-anchor="middle">19</text>
<rect x="15.60" y="616.53" width="1.40" height="1.30" fill="#000" />
<rect x="14.20" y="623.39" width="4.20" height="1.20" fill="#222" />
<rect x="15.60" y="630.14" width="1.40" height="1.30" fill="#000" />
<text x="16.3" y="640.20" font-size="7.6" fill="#101010" stroke="#101010" stroke-width="0.15" font-family="Liberation Sans, sans-serif" text-anchor="middle">20</text>
<rect x="25.30" y="66.40" width="982.70" height="590.30" fill="#ababab" />
<rect x="1008.00" y="53.00" width="0.90" height="604.60" fill="#fcfcfc" />
<rect x="6.30" y="656.70" width="1002.60" height="0.90" fill="#fcfcfc" />
<rect x="1021.80" y="25.00" width="0.80" height="645.50" fill="#fafafa" />
<rect x="6.30" y="669.60" width="1016.30" height="0.90" fill="#fafafa" />
<rect x="1008.00" y="48.90" width="13.00" height="3.10" fill="#f6f6f6" />
<rect x="1008.00" y="52.00" width="13.80" height="1.30" fill="#8c8c8c" />
<path d="M1012 62.4 L1014.8 59.2 L1017.6 62.4" stroke="#b9b9b9" stroke-width="1.3" fill="none"/>
<path d="M1012 648.4 L1014.9 651.9 L1017.8 648.4" stroke="#b9b9b9" stroke-width="1.3" fill="none"/>
<path d="M15.4 661.2 L12 663.7 L15.4 666.2" stroke="#b9b9b9" stroke-width="1.3" fill="none"/>
<path d="M999.6 661 L1003.4 663.7 L999.6 666.4" stroke="#b9b9b9" stroke-width="1.3" fill="none"/>
<rect x="115.80" y="77.80" width="807.20" height="571.10" fill="#585858" />
<rect x="112.00" y="74.00" width="808.30" height="571.60" fill="#1c1c1c" />
<rect x="112.90" y="74.90" width="806.50" height="569.80" fill="#ffffff" />
<text x="126.01" y="126.30" font-size="13.2" fill="#0c0c0c" font-family="DejaVu Sans, Liberation Sans, sans-serif" font-weight="bold" textLength="62.42" lengthAdjust="spacingAndGlyphs" >FATURA</text>
<text transform="matrix(0.5658 0 0 1.1919 224.16 125.60)" font-size="30" fill="#303030" font-family="Liberation Sans, sans-serif">Z</text>
<text transform="matrix(0.6394 0 0 0.9247 235.48 125.53)" font-size="30" fill="#303030" font-family="Liberation Sans, sans-serif">e</text>
<text transform="matrix(1.1200 0 0 0.9230 245.97 125.60)" font-size="30" fill="#303030" font-family="Liberation Sans, sans-serif">r</text>
<text transform="matrix(0.6283 0 0 0.9247 258.11 125.53)" font-size="30" fill="#303030" font-family="Liberation Sans, sans-serif">o</text>
<text transform="matrix(0.6893 0 0 0.9004 269.83 125.09)" font-size="30" fill="#303030" font-family="Liberation Sans, sans-serif">g</text>
<text transform="matrix(0.7964 0 0 1.1317 281.99 125.60)" font-size="30" fill="#303030" font-family="Liberation Sans, sans-serif">l</text>
<text transform="matrix(0.5683 0 0 0.9247 289.08 125.53)" font-size="30" fill="#303030" font-family="Liberation Sans, sans-serif">e</text>
<rect x="300.80" y="95.50" width="77.30" height="35.30" fill="#fa3d14" />
<text transform="matrix(0.6449 0 0 1.1211 306.35 125.37)" font-size="30" fill="#ffffff" font-family="Liberation Sans, sans-serif">b</text>
<text transform="matrix(0.9101 0 0 0.9753 318.17 125.50)" font-size="30" fill="#ffffff" font-family="Liberation Sans, sans-serif">i</text>
<text transform="matrix(0.8722 0 0 1.1271 324.84 125.50)" font-size="30" fill="#ffffff" font-family="Liberation Sans, sans-serif">l</text>
<text transform="matrix(0.9480 0 0 0.9753 329.50 125.50)" font-size="30" fill="#ffffff" font-family="Liberation Sans, sans-serif">i</text>
<text transform="matrix(0.6956 0 0 0.8996 336.02 123.98)" font-size="30" fill="#ffffff" font-family="Liberation Sans, sans-serif">ş</text>
<text transform="matrix(0.9101 0 0 0.9753 346.77 125.50)" font-size="30" fill="#ffffff" font-family="Liberation Sans, sans-serif">i</text>
<text transform="matrix(0.7516 0 0 0.9911 353.00 125.50)" font-size="30" fill="#ffffff" font-family="Liberation Sans, sans-serif">m</text>
<text x="127.47" y="142.70" font-size="7" fill="#444" font-family="DejaVu Sans, Liberation Sans, sans-serif" font-weight="normal" textLength="243.11" lengthAdjust="spacingAndGlyphs" >OSMAN KAVUNCU MAH. OSMAN KAVUNCU BUL. ATILGAN SOK. SEVİNÇ</text>
<text x="187.47" y="150.60" font-size="7" fill="#444" font-family="DejaVu Sans, Liberation Sans, sans-serif" font-weight="normal" textLength="122.91" lengthAdjust="spacingAndGlyphs" >SİT. NO : 12/4 MELİKGAZİ KAYSERİ</text>
<rect x="123.60" y="158.9" width="254.70" height="95.30" fill="none" stroke="#6c6c6c" stroke-width="0.8" stroke-dasharray="2 1"/>
<text x="130.23" y="171.90" font-size="6.2" fill="#262626" font-family="DejaVu Sans, Liberation Sans, sans-serif" font-weight="normal" textLength="115.01" lengthAdjust="spacingAndGlyphs" >KARAMERCAN YAPI MALZEMELERİ AŞ.</text>
<text x="130.23" y="184.80" font-size="6.2" fill="#262626" font-family="DejaVu Sans, Liberation Sans, sans-serif" font-weight="normal" textLength="164.71" lengthAdjust="spacingAndGlyphs" >ŞEKER MAHALLESİ HACIATLI SOKAK NO:62 ÜMRANİYE</text>
<text x="130.23" y="192.90" font-size="6.2" fill="#262626" font-family="DejaVu Sans, Liberation Sans, sans-serif" font-weight="normal" textLength="30.01" lengthAdjust="spacingAndGlyphs" >İSTANBUL</text>
<text x="129.92" y="217.50" font-size="6.4" fill="#262626" font-family="DejaVu Sans, Liberation Sans, sans-serif" font-weight="normal" textLength="52.18" lengthAdjust="spacingAndGlyphs" >VERGİ DAİRESİ</text>
<text x="207.02" y="217.50" font-size="6.4" fill="#262626" font-family="DejaVu Sans, Liberation Sans, sans-serif" font-weight="normal" textLength="35.53" lengthAdjust="spacingAndGlyphs" >ÜMRANİYE</text>
<text x="129.92" y="230.90" font-size="6.4" fill="#262626" font-family="DejaVu Sans, Liberation Sans, sans-serif" font-weight="normal" textLength="60.03" lengthAdjust="spacingAndGlyphs" >VERGİ NUMARASI</text>
<text x="207.32" y="230.90" font-size="6.4" fill="#262626" font-family="DejaVu Sans, Liberation Sans, sans-serif" font-weight="normal" textLength="42.28" lengthAdjust="spacingAndGlyphs" >5222125458</text>
<text x="130.41" y="244.80" font-size="6.5" fill="#262626" font-family="DejaVu Sans, Liberation Sans, sans-serif" font-weight="normal" textLength="183.75" lengthAdjust="spacingAndGlyphs" >-17.357,40 [ TL ] BORÇ BAKİYENİZ BULUNMAKTADIR.</text>
<circle cx="341.80" cy="181.90" r="16.3" fill="none" stroke="#737373" stroke-width="0.75"/>
<circle cx="341.80" cy="181.90" r="7.6" fill="none" stroke="#737373" stroke-width="0.75"/>
<path d="M341.80 198.80 L336.60 205.40 L347.00 205.40 Z" fill="none" stroke="#737373" stroke-width="0.8"/>
<text x="341.80" y="203.80" font-size="3" fill="#888" font-family="Liberation Sans, sans-serif" text-anchor="middle">T</text>
<path id="p341a" d="M332.00 181.90 A9.8 9.8 0 0 1 351.60 181.90" fill="none"/>
<path id="p341b" d="M328.40 181.90 A13.4 13.4 0 0 0 355.20 181.90" fill="none"/>
<text font-size="4.5" fill="#505050" font-family="Liberation Sans, sans-serif" font-weight="bold" text-anchor="middle" letter-spacing="0.5"><textPath href="#p341a" startOffset="50%">MALİYE</textPath></text>
<text font-size="4.3" fill="#505050" font-family="Liberation Sans, sans-serif" font-weight="bold" text-anchor="middle" letter-spacing="0.35"><textPath href="#p341b" startOffset="50%">BAKANLIĞI</textPath></text>
<text x="341.80" y="183.40" font-size="4.9" fill="#333" font-family="Liberation Sans, sans-serif" font-weight="bold" text-anchor="middle" textLength="7.8" lengthAdjust="spacingAndGlyphs">T.C.</text>
<text x="320.61" y="216.10" font-size="6.6" fill="#151515" font-family="DejaVu Sans, Liberation Sans, sans-serif" font-weight="bold" textLength="38.36" lengthAdjust="spacingAndGlyphs" >17.01.2016</text>
<text x="317.71" y="232.70" font-size="11.9" fill="#1818ff" font-family="Liberation Serif, serif" font-weight="bold" textLength="46.25" lengthAdjust="spacingAndGlyphs" >78458745</text>
<rect x="121.70" y="265.00" width="166.30" height="11.80" fill="#ff0000" />
<rect x="289.60" y="265.00" width="37.80" height="11.80" fill="#ff0000" />
<rect x="328.60" y="265.00" width="49.90" height="11.80" fill="#ff0000" />
<rect x="121.65" y="276.50" width="1.10" height="108.10" fill="#ff5c5c" />
<rect x="289.65" y="276.50" width="1.10" height="108.10" fill="#ff5c5c" />
<rect x="328.75" y="276.50" width="1.10" height="108.10" fill="#ff5c5c" />
<rect x="121.70" y="383.70" width="256.70" height="1.00" fill="#ff5c5c" />
<text x="189.73" y="274.00" font-size="6.2" fill="#fff" font-family="DejaVu Sans, Liberation Sans, sans-serif" font-weight="normal" textLength="29.41" lengthAdjust="spacingAndGlyphs" >STOK ADI</text>
<text x="295.64" y="274.00" font-size="6.2" fill="#fff" font-family="DejaVu Sans, Liberation Sans, sans-serif" font-weight="normal" textLength="23.96" lengthAdjust="spacingAndGlyphs" >MİKTAR</text>
<text x="343.04" y="274.00" font-size="6.2" fill="#fff" font-family="DejaVu Sans, Liberation Sans, sans-serif" font-weight="normal" textLength="20.31" lengthAdjust="spacingAndGlyphs" >TUTAR</text>
<text x="127.27" y="287.40" font-size="7" fill="#262626" font-family="DejaVu Sans, Liberation Sans, sans-serif" font-weight="normal" textLength="145.51" lengthAdjust="spacingAndGlyphs" >NMG-051 SALON KOLTUK TAKIMI 3 PARÇA</text>
<text x="296.28" y="287.40" font-size="7" fill="#262626" font-family="DejaVu Sans, Liberation Sans, sans-serif" font-weight="normal" textLength="4.31" lengthAdjust="spacingAndGlyphs" >1</text>
<text x="303.88" y="287.40" font-size="7" fill="#262626" font-family="DejaVu Sans, Liberation Sans, sans-serif" font-weight="normal" textLength="21.21" lengthAdjust="spacingAndGlyphs" >TAKIM</text>
<text x="346.08" y="287.40" font-size="7" fill="#262626" font-family="DejaVu Sans, Liberation Sans, sans-serif" font-weight="normal" textLength="30.61" lengthAdjust="spacingAndGlyphs" >2.449,15</text>
<text x="127.27" y="302.57" font-size="7" fill="#262626" font-family="DejaVu Sans, Liberation Sans, sans-serif" font-weight="normal" textLength="143.01" lengthAdjust="spacingAndGlyphs" >WARS UK21 TAŞ DESENLİ DUVAR KAĞIDI</text>
<text x="296.28" y="302.57" font-size="7" fill="#262626" font-family="DejaVu Sans, Liberation Sans, sans-serif" font-weight="normal" textLength="4.31" lengthAdjust="spacingAndGlyphs" >1</text>
<text x="303.88" y="302.57" font-size="7" fill="#262626" font-family="DejaVu Sans, Liberation Sans, sans-serif" font-weight="normal" textLength="10.61" lengthAdjust="spacingAndGlyphs" >m²</text>
<text x="357.48" y="302.57" font-size="7" fill="#262626" font-family="DejaVu Sans, Liberation Sans, sans-serif" font-weight="normal" textLength="19.21" lengthAdjust="spacingAndGlyphs" >27,12</text>
<text x="127.27" y="317.74" font-size="7" fill="#262626" font-family="DejaVu Sans, Liberation Sans, sans-serif" font-weight="normal" textLength="113.31" lengthAdjust="spacingAndGlyphs" >DEKORATAN STOR PERDE 180CM</text>
<text x="296.28" y="317.74" font-size="7" fill="#262626" font-family="DejaVu Sans, Liberation Sans, sans-serif" font-weight="normal" textLength="4.31" lengthAdjust="spacingAndGlyphs" >1</text>
<text x="303.88" y="317.74" font-size="7" fill="#262626" font-family="DejaVu Sans, Liberation Sans, sans-serif" font-weight="normal" textLength="10.61" lengthAdjust="spacingAndGlyphs" >m²</text>
<text x="357.48" y="317.74" font-size="7" fill="#262626" font-family="DejaVu Sans, Liberation Sans, sans-serif" font-weight="normal" textLength="19.21" lengthAdjust="spacingAndGlyphs" >44,07</text>
<text x="127.27" y="332.91" font-size="7" fill="#262626" font-family="DejaVu Sans, Liberation Sans, sans-serif" font-weight="normal" textLength="113.31" lengthAdjust="spacingAndGlyphs" >DEKORATAN STOR PERDE 140CM</text>
<text x="296.28" y="332.91" font-size="7" fill="#262626" font-family="DejaVu Sans, Liberation Sans, sans-serif" font-weight="normal" textLength="4.31" lengthAdjust="spacingAndGlyphs" >1</text>
<text x="303.88" y="332.91" font-size="7" fill="#262626" font-family="DejaVu Sans, Liberation Sans, sans-serif" font-weight="normal" textLength="10.61" lengthAdjust="spacingAndGlyphs" >m²</text>
<text x="357.48" y="332.91" font-size="7" fill="#262626" font-family="DejaVu Sans, Liberation Sans, sans-serif" font-weight="normal" textLength="19.21" lengthAdjust="spacingAndGlyphs" >50,00</text>
<text x="127.27" y="348.08" font-size="7" fill="#262626" font-family="DejaVu Sans, Liberation Sans, sans-serif" font-weight="normal" textLength="150.91" lengthAdjust="spacingAndGlyphs" >WARS UK21 DESENLİ DUVAR KAĞIDI BEYAZ</text>
<text x="296.28" y="348.08" font-size="7" fill="#262626" font-family="DejaVu Sans, Liberation Sans, sans-serif" font-weight="normal" textLength="4.31" lengthAdjust="spacingAndGlyphs" >1</text>
<text x="303.88" y="348.08" font-size="7" fill="#262626" font-family="DejaVu Sans, Liberation Sans, sans-serif" font-weight="normal" textLength="10.61" lengthAdjust="spacingAndGlyphs" >m²</text>
<text x="357.48" y="348.08" font-size="7" fill="#262626" font-family="DejaVu Sans, Liberation Sans, sans-serif" font-weight="normal" textLength="19.21" lengthAdjust="spacingAndGlyphs" >13,56</text>
<text x="127.27" y="363.25" font-size="7" fill="#262626" font-family="DejaVu Sans, Liberation Sans, sans-serif" font-weight="normal" textLength="113.31" lengthAdjust="spacingAndGlyphs" >DEKORATAN STOR PERDE 120CM</text>
<text x="296.28" y="363.25" font-size="7" fill="#262626" font-family="DejaVu Sans, Liberation Sans, sans-serif" font-weight="normal" textLength="4.31" lengthAdjust="spacingAndGlyphs" >1</text>
<text x="303.88" y="363.25" font-size="7" fill="#262626" font-family="DejaVu Sans, Liberation Sans, sans-serif" font-weight="normal" textLength="10.61" lengthAdjust="spacingAndGlyphs" >m²</text>
<text x="357.48" y="363.25" font-size="7" fill="#262626" font-family="DejaVu Sans, Liberation Sans, sans-serif" font-weight="normal" textLength="19.21" lengthAdjust="spacingAndGlyphs" >42,37</text>
<text x="127.27" y="378.42" font-size="7" fill="#262626" font-family="DejaVu Sans, Liberation Sans, sans-serif" font-weight="normal" textLength="102.01" lengthAdjust="spacingAndGlyphs" >NMG-051 ORTA SEHBA BEYAZ</text>
<text x="296.28" y="378.42" font-size="7" fill="#262626" font-family="DejaVu Sans, Liberation Sans, sans-serif" font-weight="normal" textLength="4.31" lengthAdjust="spacingAndGlyphs" >1</text>
<text x="303.88" y="378.42" font-size="7" fill="#262626" font-family="DejaVu Sans, Liberation Sans, sans-serif" font-weight="normal" textLength="21.21" lengthAdjust="spacingAndGlyphs" >TAKIM</text>
<text x="346.08" y="378.42" font-size="7" fill="#262626" font-family="DejaVu Sans, Liberation Sans, sans-serif" font-weight="normal" textLength="30.61" lengthAdjust="spacingAndGlyphs" >2.449,15</text>
<rect x="126.00" y="399.00" width="0.94" height="24.20" fill="#000" opacity="0.55"/>
<rect x="129.37" y="399.00" width="1.87" height="24.20" fill="#000" opacity="0.45"/>
<rect x="131.24" y="399.00" width="2.06" height="24.20" fill="#000" opacity="0.9"/>
<rect x="134.04" y="399.00" width="2.06" height="24.20" fill="#000" opacity="1"/>
<rect x="137.04" y="399.00" width="1.40" height="24.20" fill="#000" opacity="0.5"/>
<rect x="138.44" y="399.00" width="1.59" height="24.20" fill="#000" opacity="0.9"/>
<rect x="140.97" y="399.00" width="0.94" height="24.20" fill="#000" opacity="0.45"/>
<rect x="144.05" y="399.00" width="1.22" height="24.20" fill="#000" opacity="0.75"/>
<rect x="145.64" y="399.00" width="1.50" height="24.20" fill="#000" opacity="1"/>
<rect x="148.07" y="399.00" width="1.87" height="24.20" fill="#000" opacity="0.6"/>
<rect x="150.13" y="399.00" width="2.06" height="24.20" fill="#000" opacity="1"/>
<rect x="153.12" y="399.00" width="0.75" height="24.20" fill="#000" opacity="0.5"/>
<rect x="155.00" y="399.00" width="2.15" height="24.20" fill="#000" opacity="1"/>
<rect x="157.15" y="399.00" width="1.87" height="24.20" fill="#000" opacity="0.55"/>
<rect x="159.95" y="399.00" width="1.12" height="24.20" fill="#000" opacity="0.8"/>
<rect x="162.29" y="399.00" width="0.94" height="24.20" fill="#000" opacity="0.45"/>
<rect x="165.56" y="399.00" width="2.53" height="24.20" fill="#000" opacity="1"/>
<rect x="169.77" y="399.00" width="2.34" height="24.20" fill="#000" opacity="1"/>
<rect x="173.05" y="399.00" width="2.99" height="24.20" fill="#000" opacity="0.6"/>
<rect x="178.19" y="399.00" width="2.81" height="24.20" fill="#000" opacity="1"/>
<rect x="181.00" y="399.00" width="1.87" height="24.20" fill="#000" opacity="0.45"/>
<rect x="184.08" y="399.00" width="1.59" height="24.20" fill="#000" opacity="0.8"/>
<rect x="185.67" y="399.00" width="1.87" height="24.20" fill="#000" opacity="0.45"/>
<rect x="187.55" y="399.00" width="2.34" height="24.20" fill="#000" opacity="1"/>
<rect x="192.97" y="399.00" width="2.06" height="24.20" fill="#000" opacity="1"/>
<rect x="195.78" y="399.00" width="1.12" height="24.20" fill="#000" opacity="0.8"/>
<rect x="198.30" y="399.00" width="1.22" height="24.20" fill="#000" opacity="0.45"/>
<rect x="199.89" y="399.00" width="2.15" height="24.20" fill="#000" opacity="1"/>
<rect x="202.98" y="399.00" width="2.34" height="24.20" fill="#000" opacity="0.85"/>
<rect x="205.32" y="399.00" width="1.40" height="24.20" fill="#000" opacity="0.45"/>
<rect x="237.70" y="394.40" width="71.10" height="14.00" fill="#ff0000" />
<rect x="237.70" y="407.50" width="142.20" height="1.00" fill="#ff3030" />
<text x="239.21" y="403.10" font-size="6.5" fill="#fff" font-family="DejaVu Sans, Liberation Sans, sans-serif" font-weight="bold" textLength="52.90" lengthAdjust="spacingAndGlyphs" >BÜRÜT TOPLAM</text>
<text x="344.98" y="403.10" font-size="7" fill="#151515" font-family="DejaVu Sans, Liberation Sans, sans-serif" font-weight="bold" textLength="33.71" lengthAdjust="spacingAndGlyphs" >5.075,42</text>
<rect x="237.70" y="411.30" width="71.10" height="13.90" fill="#ff0000" />
<rect x="237.70" y="424.30" width="142.20" height="1.00" fill="#ff3030" />
<text x="239.21" y="421.00" font-size="6.5" fill="#fff" font-family="DejaVu Sans, Liberation Sans, sans-serif" font-weight="bold" textLength="44.15" lengthAdjust="spacingAndGlyphs" >KDV TOPLAM</text>
<text x="352.48" y="420.00" font-size="7" fill="#151515" font-family="DejaVu Sans, Liberation Sans, sans-serif" font-weight="bold" textLength="26.21" lengthAdjust="spacingAndGlyphs" >913,58</text>
<rect x="237.70" y="428.10" width="71.10" height="13.70" fill="#ff0000" />
<rect x="237.70" y="440.90" width="142.20" height="1.00" fill="#ff3030" />
<text x="239.21" y="437.80" font-size="6.5" fill="#fff" font-family="DejaVu Sans, Liberation Sans, sans-serif" font-weight="bold" textLength="52.15" lengthAdjust="spacingAndGlyphs" >GENEL TOPLAM</text>
<text x="344.98" y="437.80" font-size="7" fill="#151515" font-family="DejaVu Sans, Liberation Sans, sans-serif" font-weight="bold" textLength="33.71" lengthAdjust="spacingAndGlyphs" >5.989,00</text>
<text x="193.18" y="458.80" font-size="8.3" fill="#2a2a2a" font-family="Liberation Sans, sans-serif" font-weight="normal" textLength="121.98" lengthAdjust="spacingAndGlyphs" >beşbindokuzyüzseksendokuz TL</text>
<text x="131.27" y="483.30" font-size="6.4" fill="#262626" font-family="DejaVu Sans, Liberation Sans, sans-serif" font-weight="normal" textLength="82.68" lengthAdjust="spacingAndGlyphs" >DÜZENLEYEN PERSONEL</text>
<text x="228.77" y="483.30" font-size="6.4" fill="#262626" font-family="DejaVu Sans, Liberation Sans, sans-serif" font-weight="normal" textLength="60.38" lengthAdjust="spacingAndGlyphs" >: SELMA TONGUÇ</text>
<text x="131.27" y="495.00" font-size="6.4" fill="#262626" font-family="DejaVu Sans, Liberation Sans, sans-serif" font-weight="normal" textLength="60.83" lengthAdjust="spacingAndGlyphs" >BELGE NUMARASI</text>
<text x="228.77" y="495.00" font-size="6.4" fill="#262626" font-family="DejaVu Sans, Liberation Sans, sans-serif" font-weight="normal" textLength="30.58" lengthAdjust="spacingAndGlyphs" >: 125874</text>
<rect x="129.30" y="512.5" width="250.40" height="66.90" fill="none" stroke="#ff2020" stroke-width="0.85" stroke-dasharray="2 1"/>
<text x="148.53" y="527.00" font-size="6.3" fill="#262626" font-family="DejaVu Sans, Liberation Sans, sans-serif" font-weight="normal" textLength="208.82" lengthAdjust="spacingAndGlyphs" >YAPI KREDİ BANKASI YENİ SANAYİ/KAYSERİ 1002-43293208</text>
<text x="197.53" y="534.90" font-size="6.3" fill="#262626" font-family="DejaVu Sans, Liberation Sans, sans-serif" font-weight="normal" textLength="110.82" lengthAdjust="spacingAndGlyphs" >TR500006701000000043293208</text>
<text x="137.03" y="553.10" font-size="6.3" fill="#262626" font-family="DejaVu Sans, Liberation Sans, sans-serif" font-weight="normal" textLength="231.82" lengthAdjust="spacingAndGlyphs" >İhtiyaçlarınızı en kaliteli bir şekilde çözümleme hedefi sunan Zerogle</text>
<text x="135.93" y="561.00" font-size="6.3" fill="#262626" font-family="DejaVu Sans, Liberation Sans, sans-serif" font-weight="normal" textLength="235.22" lengthAdjust="spacingAndGlyphs" >Bilişim çağın merkezi kurmuştur. Zerogle bilişim çözümlerine farklı bir</text>
<text x="211.53" y="568.80" font-size="6.3" fill="#262626" font-family="DejaVu Sans, Liberation Sans, sans-serif" font-weight="normal" textLength="83.82" lengthAdjust="spacingAndGlyphs" >bakış açısı ile yaklaşıyor.</text>
<rect x="129.00" y="585.50" width="53.80" height="14.00" fill="#ff0000" />
<rect x="129.00" y="598.50" width="121.80" height="1.00" fill="#ff0000" />
<text x="130.31" y="594.20" font-size="6.5" fill="#fff" font-family="DejaVu Sans, Liberation Sans, sans-serif" font-weight="bold" textLength="45.84" lengthAdjust="spacingAndGlyphs" >TESLİM EDEN</text>
<rect x="257.50" y="585.50" width="54.25" height="14.00" fill="#ff0000" />
<rect x="257.50" y="598.50" width="122.20" height="1.00" fill="#ff0000" />
<text x="259.01" y="594.20" font-size="6.5" fill="#fff" font-family="DejaVu Sans, Liberation Sans, sans-serif" font-weight="bold" textLength="45.35" lengthAdjust="spacingAndGlyphs" >TESLİM ALAN</text>
<text x="389.51" y="126.30" font-size="13.2" fill="#0c0c0c" font-family="DejaVu Sans, Liberation Sans, sans-serif" font-weight="bold" textLength="62.42" lengthAdjust="spacingAndGlyphs" >FATURA</text>
<text transform="matrix(0.5658 0 0 1.1919 487.26 125.60)" font-size="30" fill="#303030" font-family="Liberation Sans, sans-serif">Z</text>
<text transform="matrix(0.6394 0 0 0.9247 498.58 125.53)" font-size="30" fill="#303030" font-family="Liberation Sans, sans-serif">e</text>
<text transform="matrix(1.1200 0 0 0.9230 509.07 125.60)" font-size="30" fill="#303030" font-family="Liberation Sans, sans-serif">r</text>
<text transform="matrix(0.6283 0 0 0.9247 521.21 125.53)" font-size="30" fill="#303030" font-family="Liberation Sans, sans-serif">o</text>
<text transform="matrix(0.6893 0 0 0.9004 532.93 125.09)" font-size="30" fill="#303030" font-family="Liberation Sans, sans-serif">g</text>
<text transform="matrix(0.7964 0 0 1.1317 545.09 125.60)" font-size="30" fill="#303030" font-family="Liberation Sans, sans-serif">l</text>
<text transform="matrix(0.5683 0 0 0.9247 552.18 125.53)" font-size="30" fill="#303030" font-family="Liberation Sans, sans-serif">e</text>
<rect x="564.30" y="95.50" width="77.30" height="35.30" fill="#4ab2e6" />
<text transform="matrix(0.6449 0 0 1.1211 569.35 125.37)" font-size="30" fill="#ffffff" font-family="Liberation Sans, sans-serif">b</text>
<text transform="matrix(0.9101 0 0 0.9753 581.17 125.50)" font-size="30" fill="#ffffff" font-family="Liberation Sans, sans-serif">i</text>
<text transform="matrix(0.8722 0 0 1.1271 587.84 125.50)" font-size="30" fill="#ffffff" font-family="Liberation Sans, sans-serif">l</text>
<text transform="matrix(0.9480 0 0 0.9753 592.50 125.50)" font-size="30" fill="#ffffff" font-family="Liberation Sans, sans-serif">i</text>
<text transform="matrix(0.6956 0 0 0.8996 599.02 123.98)" font-size="30" fill="#ffffff" font-family="Liberation Sans, sans-serif">ş</text>
<text transform="matrix(0.9101 0 0 0.9753 609.77 125.50)" font-size="30" fill="#ffffff" font-family="Liberation Sans, sans-serif">i</text>
<text transform="matrix(0.7516 0 0 0.9911 616.00 125.50)" font-size="30" fill="#ffffff" font-family="Liberation Sans, sans-serif">m</text>
<text x="390.98" y="142.70" font-size="7" fill="#444" font-family="DejaVu Sans, Liberation Sans, sans-serif" font-weight="normal" textLength="243.11" lengthAdjust="spacingAndGlyphs" >OSMAN KAVUNCU MAH. OSMAN KAVUNCU BUL. ATILGAN SOK. SEVİNÇ</text>
<text x="450.98" y="150.60" font-size="7" fill="#444" font-family="DejaVu Sans, Liberation Sans, sans-serif" font-weight="normal" textLength="122.91" lengthAdjust="spacingAndGlyphs" >SİT. NO : 12/4 MELİKGAZİ KAYSERİ</text>
<rect x="387.10" y="158.9" width="254.70" height="95.30" fill="none" stroke="#6c6c6c" stroke-width="0.8" stroke-dasharray="2 1"/>
<text x="393.74" y="171.90" font-size="6.2" fill="#262626" font-family="DejaVu Sans, Liberation Sans, sans-serif" font-weight="normal" textLength="115.01" lengthAdjust="spacingAndGlyphs" >KARAMERCAN YAPI MALZEMELERİ AŞ.</text>
<text x="393.74" y="184.80" font-size="6.2" fill="#262626" font-family="DejaVu Sans, Liberation Sans, sans-serif" font-weight="normal" textLength="164.71" lengthAdjust="spacingAndGlyphs" >ŞEKER MAHALLESİ HACIATLI SOKAK NO:62 ÜMRANİYE</text>
<text x="393.74" y="192.90" font-size="6.2" fill="#262626" font-family="DejaVu Sans, Liberation Sans, sans-serif" font-weight="normal" textLength="30.01" lengthAdjust="spacingAndGlyphs" >İSTANBUL</text>
<text x="393.42" y="217.50" font-size="6.4" fill="#262626" font-family="DejaVu Sans, Liberation Sans, sans-serif" font-weight="normal" textLength="52.18" lengthAdjust="spacingAndGlyphs" >VERGİ DAİRESİ</text>
<text x="470.52" y="217.50" font-size="6.4" fill="#262626" font-family="DejaVu Sans, Liberation Sans, sans-serif" font-weight="normal" textLength="35.53" lengthAdjust="spacingAndGlyphs" >ÜMRANİYE</text>
<text x="393.42" y="230.90" font-size="6.4" fill="#262626" font-family="DejaVu Sans, Liberation Sans, sans-serif" font-weight="normal" textLength="60.03" lengthAdjust="spacingAndGlyphs" >VERGİ NUMARASI</text>
<text x="470.82" y="230.90" font-size="6.4" fill="#262626" font-family="DejaVu Sans, Liberation Sans, sans-serif" font-weight="normal" textLength="42.28" lengthAdjust="spacingAndGlyphs" >5222125458</text>
<text x="393.91" y="244.80" font-size="6.5" fill="#262626" font-family="DejaVu Sans, Liberation Sans, sans-serif" font-weight="normal" textLength="183.74" lengthAdjust="spacingAndGlyphs" >-17.357,40 [ TL ] BORÇ BAKİYENİZ BULUNMAKTADIR.</text>
<circle cx="605.30" cy="181.90" r="16.3" fill="none" stroke="#737373" stroke-width="0.75"/>
<circle cx="605.30" cy="181.90" r="7.6" fill="none" stroke="#737373" stroke-width="0.75"/>
<path d="M605.30 198.80 L600.10 205.40 L610.50 205.40 Z" fill="none" stroke="#737373" stroke-width="0.8"/>
<text x="605.30" y="203.80" font-size="3" fill="#888" font-family="Liberation Sans, sans-serif" text-anchor="middle">T</text>
<path id="p605a" d="M595.50 181.90 A9.8 9.8 0 0 1 615.10 181.90" fill="none"/>
<path id="p605b" d="M591.90 181.90 A13.4 13.4 0 0 0 618.70 181.90" fill="none"/>
<text font-size="4.5" fill="#505050" font-family="Liberation Sans, sans-serif" font-weight="bold" text-anchor="middle" letter-spacing="0.5"><textPath href="#p605a" startOffset="50%">MALİYE</textPath></text>
<text font-size="4.3" fill="#505050" font-family="Liberation Sans, sans-serif" font-weight="bold" text-anchor="middle" letter-spacing="0.35"><textPath href="#p605b" startOffset="50%">BAKANLIĞI</textPath></text>
<text x="605.30" y="183.40" font-size="4.9" fill="#333" font-family="Liberation Sans, sans-serif" font-weight="bold" text-anchor="middle" textLength="7.8" lengthAdjust="spacingAndGlyphs">T.C.</text>
<text x="583.90" y="216.10" font-size="6.6" fill="#151515" font-family="DejaVu Sans, Liberation Sans, sans-serif" font-weight="bold" textLength="39.16" lengthAdjust="spacingAndGlyphs" >Belge tarihi</text>
<text x="581.21" y="232.70" font-size="11.9" fill="#1818ff" font-family="Liberation Serif, serif" font-weight="bold" textLength="46.25" lengthAdjust="spacingAndGlyphs" >78458745</text>
<rect x="388.90" y="265.00" width="166.30" height="11.80" fill="#4ab2e6" />
<rect x="556.80" y="265.00" width="37.80" height="11.80" fill="#4ab2e6" />
<rect x="595.80" y="265.00" width="49.90" height="11.80" fill="#4ab2e6" />
<rect x="388.85" y="276.50" width="1.10" height="108.10" fill="#7ac8ee" />
<rect x="556.85" y="276.50" width="1.10" height="108.10" fill="#7ac8ee" />
<rect x="595.95" y="276.50" width="1.10" height="108.10" fill="#7ac8ee" />
<rect x="388.90" y="383.70" width="256.70" height="1.00" fill="#7ac8ee" />
<text x="456.94" y="274.00" font-size="6.2" fill="#fff" font-family="DejaVu Sans, Liberation Sans, sans-serif" font-weight="normal" textLength="29.41" lengthAdjust="spacingAndGlyphs" >STOK ADI</text>
<text x="562.83" y="274.00" font-size="6.2" fill="#fff" font-family="DejaVu Sans, Liberation Sans, sans-serif" font-weight="normal" textLength="23.96" lengthAdjust="spacingAndGlyphs" >MİKTAR</text>
<text x="610.24" y="274.00" font-size="6.2" fill="#fff" font-family="DejaVu Sans, Liberation Sans, sans-serif" font-weight="normal" textLength="20.31" lengthAdjust="spacingAndGlyphs" >TUTAR</text>
<text x="393.38" y="287.40" font-size="7" fill="#262626" font-family="DejaVu Sans, Liberation Sans, sans-serif" font-weight="normal" textLength="145.51" lengthAdjust="spacingAndGlyphs" >NMG-051 SALON KOLTUK TAKIMI 3 PARÇA</text>
<text x="563.48" y="287.40" font-size="7" fill="#262626" font-family="DejaVu Sans, Liberation Sans, sans-serif" font-weight="normal" textLength="4.31" lengthAdjust="spacingAndGlyphs" >1</text>
<text x="571.07" y="287.40" font-size="7" fill="#262626" font-family="DejaVu Sans, Liberation Sans, sans-serif" font-weight="normal" textLength="21.21" lengthAdjust="spacingAndGlyphs" >TAKIM</text>
<text x="613.27" y="287.40" font-size="7" fill="#262626" font-family="DejaVu Sans, Liberation Sans, sans-serif" font-weight="normal" textLength="30.61" lengthAdjust="spacingAndGlyphs" >2.449,15</text>
<text x="393.38" y="302.57" font-size="7" fill="#262626" font-family="DejaVu Sans, Liberation Sans, sans-serif" font-weight="normal" textLength="143.01" lengthAdjust="spacingAndGlyphs" >WARS UK21 TAŞ DESENLİ DUVAR KAĞIDI</text>
<text x="563.48" y="302.57" font-size="7" fill="#262626" font-family="DejaVu Sans, Liberation Sans, sans-serif" font-weight="normal" textLength="4.31" lengthAdjust="spacingAndGlyphs" >1</text>
<text x="571.07" y="302.57" font-size="7" fill="#262626" font-family="DejaVu Sans, Liberation Sans, sans-serif" font-weight="normal" textLength="10.61" lengthAdjust="spacingAndGlyphs" >m²</text>
<text x="624.68" y="302.57" font-size="7" fill="#262626" font-family="DejaVu Sans, Liberation Sans, sans-serif" font-weight="normal" textLength="19.21" lengthAdjust="spacingAndGlyphs" >27,12</text>
<text x="393.38" y="317.74" font-size="7" fill="#262626" font-family="DejaVu Sans, Liberation Sans, sans-serif" font-weight="normal" textLength="113.31" lengthAdjust="spacingAndGlyphs" >DEKORATAN STOR PERDE 180CM</text>
<text x="563.48" y="317.74" font-size="7" fill="#262626" font-family="DejaVu Sans, Liberation Sans, sans-serif" font-weight="normal" textLength="4.31" lengthAdjust="spacingAndGlyphs" >1</text>
<text x="571.07" y="317.74" font-size="7" fill="#262626" font-family="DejaVu Sans, Liberation Sans, sans-serif" font-weight="normal" textLength="10.61" lengthAdjust="spacingAndGlyphs" >m²</text>
<text x="624.68" y="317.74" font-size="7" fill="#262626" font-family="DejaVu Sans, Liberation Sans, sans-serif" font-weight="normal" textLength="19.21" lengthAdjust="spacingAndGlyphs" >44,07</text>
<text x="393.38" y="332.91" font-size="7" fill="#262626" font-family="DejaVu Sans, Liberation Sans, sans-serif" font-weight="normal" textLength="113.31" lengthAdjust="spacingAndGlyphs" >DEKORATAN STOR PERDE 140CM</text>
<text x="563.48" y="332.91" font-size="7" fill="#262626" font-family="DejaVu Sans, Liberation Sans, sans-serif" font-weight="normal" textLength="4.31" lengthAdjust="spacingAndGlyphs" >1</text>
<text x="571.07" y="332.91" font-size="7" fill="#262626" font-family="DejaVu Sans, Liberation Sans, sans-serif" font-weight="normal" textLength="10.61" lengthAdjust="spacingAndGlyphs" >m²</text>
<text x="624.68" y="332.91" font-size="7" fill="#262626" font-family="DejaVu Sans, Liberation Sans, sans-serif" font-weight="normal" textLength="19.21" lengthAdjust="spacingAndGlyphs" >50,00</text>
<text x="393.38" y="348.08" font-size="7" fill="#262626" font-family="DejaVu Sans, Liberation Sans, sans-serif" font-weight="normal" textLength="150.91" lengthAdjust="spacingAndGlyphs" >WARS UK21 DESENLİ DUVAR KAĞIDI BEYAZ</text>
<text x="563.48" y="348.08" font-size="7" fill="#262626" font-family="DejaVu Sans, Liberation Sans, sans-serif" font-weight="normal" textLength="4.31" lengthAdjust="spacingAndGlyphs" >1</text>
<text x="571.07" y="348.08" font-size="7" fill="#262626" font-family="DejaVu Sans, Liberation Sans, sans-serif" font-weight="normal" textLength="10.61" lengthAdjust="spacingAndGlyphs" >m²</text>
<text x="624.68" y="348.08" font-size="7" fill="#262626" font-family="DejaVu Sans, Liberation Sans, sans-serif" font-weight="normal" textLength="19.21" lengthAdjust="spacingAndGlyphs" >13,56</text>
<text x="393.38" y="363.25" font-size="7" fill="#262626" font-family="DejaVu Sans, Liberation Sans, sans-serif" font-weight="normal" textLength="113.31" lengthAdjust="spacingAndGlyphs" >DEKORATAN STOR PERDE 120CM</text>
<text x="563.48" y="363.25" font-size="7" fill="#262626" font-family="DejaVu Sans, Liberation Sans, sans-serif" font-weight="normal" textLength="4.31" lengthAdjust="spacingAndGlyphs" >1</text>
<text x="571.07" y="363.25" font-size="7" fill="#262626" font-family="DejaVu Sans, Liberation Sans, sans-serif" font-weight="normal" textLength="10.61" lengthAdjust="spacingAndGlyphs" >m²</text>
<text x="624.68" y="363.25" font-size="7" fill="#262626" font-family="DejaVu Sans, Liberation Sans, sans-serif" font-weight="normal" textLength="19.21" lengthAdjust="spacingAndGlyphs" >42,37</text>
<text x="393.38" y="378.42" font-size="7" fill="#262626" font-family="DejaVu Sans, Liberation Sans, sans-serif" font-weight="normal" textLength="102.01" lengthAdjust="spacingAndGlyphs" >NMG-051 ORTA SEHBA BEYAZ</text>
<text x="563.48" y="378.42" font-size="7" fill="#262626" font-family="DejaVu Sans, Liberation Sans, sans-serif" font-weight="normal" textLength="4.31" lengthAdjust="spacingAndGlyphs" >1</text>
<text x="571.07" y="378.42" font-size="7" fill="#262626" font-family="DejaVu Sans, Liberation Sans, sans-serif" font-weight="normal" textLength="21.21" lengthAdjust="spacingAndGlyphs" >TAKIM</text>
<text x="613.27" y="378.42" font-size="7" fill="#262626" font-family="DejaVu Sans, Liberation Sans, sans-serif" font-weight="normal" textLength="30.61" lengthAdjust="spacingAndGlyphs" >2.449,15</text>
<rect x="393.28" y="399.00" width="1.40" height="24.20" fill="#000" opacity="0.45"/>
<rect x="394.68" y="399.00" width="2.34" height="24.20" fill="#000" opacity="0.85"/>
<rect x="397.96" y="399.00" width="2.15" height="24.20" fill="#000" opacity="1"/>
<rect x="400.48" y="399.00" width="1.22" height="24.20" fill="#000" opacity="0.45"/>
<rect x="403.10" y="399.00" width="1.12" height="24.20" fill="#000" opacity="0.8"/>
<rect x="404.97" y="399.00" width="2.06" height="24.20" fill="#000" opacity="1"/>
<rect x="410.12" y="399.00" width="2.34" height="24.20" fill="#000" opacity="1"/>
<rect x="412.45" y="399.00" width="1.87" height="24.20" fill="#000" opacity="0.45"/>
<rect x="414.33" y="399.00" width="1.59" height="24.20" fill="#000" opacity="0.8"/>
<rect x="417.13" y="399.00" width="1.87" height="24.20" fill="#000" opacity="0.45"/>
<rect x="419.00" y="399.00" width="2.81" height="24.20" fill="#000" opacity="1"/>
<rect x="423.96" y="399.00" width="2.99" height="24.20" fill="#000" opacity="0.6"/>
<rect x="427.89" y="399.00" width="2.34" height="24.20" fill="#000" opacity="1"/>
<rect x="431.91" y="399.00" width="2.53" height="24.20" fill="#000" opacity="1"/>
<rect x="436.77" y="399.00" width="0.94" height="24.20" fill="#000" opacity="0.45"/>
<rect x="438.92" y="399.00" width="1.12" height="24.20" fill="#000" opacity="0.8"/>
<rect x="440.98" y="399.00" width="1.87" height="24.20" fill="#000" opacity="0.55"/>
<rect x="442.85" y="399.00" width="2.15" height="24.20" fill="#000" opacity="1"/>
<rect x="446.13" y="399.00" width="0.75" height="24.20" fill="#000" opacity="0.5"/>
<rect x="447.81" y="399.00" width="2.06" height="24.20" fill="#000" opacity="1"/>
<rect x="450.06" y="399.00" width="1.87" height="24.20" fill="#000" opacity="0.6"/>
<rect x="452.86" y="399.00" width="1.50" height="24.20" fill="#000" opacity="1"/>
<rect x="454.73" y="399.00" width="1.22" height="24.20" fill="#000" opacity="0.75"/>
<rect x="458.10" y="399.00" width="0.94" height="24.20" fill="#000" opacity="0.45"/>
<rect x="459.97" y="399.00" width="1.59" height="24.20" fill="#000" opacity="0.9"/>
<rect x="461.56" y="399.00" width="1.40" height="24.20" fill="#000" opacity="0.5"/>
<rect x="463.90" y="399.00" width="2.06" height="24.20" fill="#000" opacity="1"/>
<rect x="466.70" y="399.00" width="2.06" height="24.20" fill="#000" opacity="0.9"/>
<rect x="468.76" y="399.00" width="1.87" height="24.20" fill="#000" opacity="0.45"/>
<rect x="473.06" y="399.00" width="0.94" height="24.20" fill="#000" opacity="0.55"/>
<rect x="504.70" y="394.40" width="71.10" height="14.00" fill="#4ab2e6" />
<rect x="504.70" y="407.50" width="142.20" height="1.00" fill="#7ac8ee" />
<text x="506.21" y="403.10" font-size="6.5" fill="#fff" font-family="DejaVu Sans, Liberation Sans, sans-serif" font-weight="bold" textLength="52.89" lengthAdjust="spacingAndGlyphs" >BÜRÜT TOPLAM</text>
<text x="611.98" y="403.10" font-size="7" fill="#151515" font-family="DejaVu Sans, Liberation Sans, sans-serif" font-weight="bold" textLength="33.71" lengthAdjust="spacingAndGlyphs" >5.075,42</text>
<rect x="504.70" y="411.30" width="71.10" height="13.90" fill="#4ab2e6" />
<rect x="504.70" y="424.30" width="142.20" height="1.00" fill="#7ac8ee" />
<text x="506.21" y="421.00" font-size="6.5" fill="#fff" font-family="DejaVu Sans, Liberation Sans, sans-serif" font-weight="bold" textLength="44.14" lengthAdjust="spacingAndGlyphs" >KDV TOPLAM</text>
<text x="619.48" y="420.00" font-size="7" fill="#151515" font-family="DejaVu Sans, Liberation Sans, sans-serif" font-weight="bold" textLength="26.21" lengthAdjust="spacingAndGlyphs" >913,58</text>
<rect x="504.70" y="428.10" width="71.10" height="13.70" fill="#4ab2e6" />
<rect x="504.70" y="440.90" width="142.20" height="1.00" fill="#7ac8ee" />
<text x="506.21" y="437.80" font-size="6.5" fill="#fff" font-family="DejaVu Sans, Liberation Sans, sans-serif" font-weight="bold" textLength="52.14" lengthAdjust="spacingAndGlyphs" >GENEL TOPLAM</text>
<text x="611.98" y="437.80" font-size="7" fill="#151515" font-family="DejaVu Sans, Liberation Sans, sans-serif" font-weight="bold" textLength="33.71" lengthAdjust="spacingAndGlyphs" >5.989,00</text>
<text x="460.18" y="458.80" font-size="8.3" fill="#2a2a2a" font-family="Liberation Sans, sans-serif" font-weight="normal" textLength="121.98" lengthAdjust="spacingAndGlyphs" >beşbindokuzyüzseksendokuz TL</text>
<text x="397.97" y="483.30" font-size="6.4" fill="#262626" font-family="DejaVu Sans, Liberation Sans, sans-serif" font-weight="normal" textLength="82.68" lengthAdjust="spacingAndGlyphs" >DÜZENLEYEN PERSONEL</text>
<text x="495.47" y="483.30" font-size="6.4" fill="#262626" font-family="DejaVu Sans, Liberation Sans, sans-serif" font-weight="normal" textLength="60.38" lengthAdjust="spacingAndGlyphs" >: SELMA TONGUÇ</text>
<text x="397.97" y="495.00" font-size="6.4" fill="#262626" font-family="DejaVu Sans, Liberation Sans, sans-serif" font-weight="normal" textLength="60.83" lengthAdjust="spacingAndGlyphs" >BELGE NUMARASI</text>
<text x="495.47" y="495.00" font-size="6.4" fill="#262626" font-family="DejaVu Sans, Liberation Sans, sans-serif" font-weight="normal" textLength="30.58" lengthAdjust="spacingAndGlyphs" >: 125874</text>
<rect x="396.00" y="512.5" width="250.40" height="66.90" fill="none" stroke="#5ab9e8" stroke-width="0.85" stroke-dasharray="2 1"/>
<text x="415.23" y="527.00" font-size="6.3" fill="#262626" font-family="DejaVu Sans, Liberation Sans, sans-serif" font-weight="normal" textLength="208.82" lengthAdjust="spacingAndGlyphs" >YAPI KREDİ BANKASI YENİ SANAYİ/KAYSERİ 1002-43293208</text>
<text x="464.23" y="534.90" font-size="6.3" fill="#262626" font-family="DejaVu Sans, Liberation Sans, sans-serif" font-weight="normal" textLength="110.82" lengthAdjust="spacingAndGlyphs" >TR500006701000000043293208</text>
<text x="403.73" y="553.10" font-size="6.3" fill="#262626" font-family="DejaVu Sans, Liberation Sans, sans-serif" font-weight="normal" textLength="231.82" lengthAdjust="spacingAndGlyphs" >İhtiyaçlarınızı en kaliteli bir şekilde çözümleme hedefi sunan Zerogle</text>
<text x="402.63" y="561.00" font-size="6.3" fill="#262626" font-family="DejaVu Sans, Liberation Sans, sans-serif" font-weight="normal" textLength="235.22" lengthAdjust="spacingAndGlyphs" >Bilişim çağın merkezi kurmuştur. Zerogle bilişim çözümlerine farklı bir</text>
<text x="478.23" y="568.80" font-size="6.3" fill="#262626" font-family="DejaVu Sans, Liberation Sans, sans-serif" font-weight="normal" textLength="83.82" lengthAdjust="spacingAndGlyphs" >bakış açısı ile yaklaşıyor.</text>
<rect x="395.70" y="585.50" width="53.80" height="14.00" fill="#4ab2e6" />
<rect x="395.70" y="598.50" width="121.80" height="1.00" fill="#4ab2e6" />
<text x="397.01" y="594.20" font-size="6.5" fill="#fff" font-family="DejaVu Sans, Liberation Sans, sans-serif" font-weight="bold" textLength="45.85" lengthAdjust="spacingAndGlyphs" >TESLİM EDEN</text>
<rect x="524.20" y="585.50" width="54.25" height="14.00" fill="#4ab2e6" />
<rect x="524.20" y="598.50" width="122.20" height="1.00" fill="#4ab2e6" />
<text x="525.71" y="594.20" font-size="6.5" fill="#fff" font-family="DejaVu Sans, Liberation Sans, sans-serif" font-weight="bold" textLength="45.34" lengthAdjust="spacingAndGlyphs" >TESLİM ALAN</text>
<text x="653.01" y="126.30" font-size="13.2" fill="#0c0c0c" font-family="DejaVu Sans, Liberation Sans, sans-serif" font-weight="bold" textLength="62.42" lengthAdjust="spacingAndGlyphs" >FATURA</text>
<text transform="matrix(0.5658 0 0 1.1919 750.76 125.60)" font-size="30" fill="#303030" font-family="Liberation Sans, sans-serif">Z</text>
<text transform="matrix(0.6394 0 0 0.9247 762.08 125.53)" font-size="30" fill="#303030" font-family="Liberation Sans, sans-serif">e</text>
<text transform="matrix(1.1200 0 0 0.9230 772.57 125.60)" font-size="30" fill="#303030" font-family="Liberation Sans, sans-serif">r</text>
<text transform="matrix(0.6283 0 0 0.9247 784.71 125.53)" font-size="30" fill="#303030" font-family="Liberation Sans, sans-serif">o</text>
<text transform="matrix(0.6893 0 0 0.9004 796.43 125.09)" font-size="30" fill="#303030" font-family="Liberation Sans, sans-serif">g</text>
<text transform="matrix(0.7964 0 0 1.1317 808.59 125.60)" font-size="30" fill="#303030" font-family="Liberation Sans, sans-serif">l</text>
<text transform="matrix(0.5683 0 0 0.9247 815.68 125.53)" font-size="30" fill="#303030" font-family="Liberation Sans, sans-serif">e</text>
<rect x="827.80" y="95.50" width="77.30" height="35.30" fill="#808080" />
<text transform="matrix(0.6449 0 0 1.1211 833.45 125.37)" font-size="30" fill="#ffffff" font-family="Liberation Sans, sans-serif">b</text>
<text transform="matrix(0.9101 0 0 0.9753 845.27 125.50)" font-size="30" fill="#ffffff" font-family="Liberation Sans, sans-serif">i</text>
<text transform="matrix(0.8722 0 0 1.1271 851.94 125.50)" font-size="30" fill="#ffffff" font-family="Liberation Sans, sans-serif">l</text>
<text transform="matrix(0.9480 0 0 0.9753 856.60 125.50)" font-size="30" fill="#ffffff" font-family="Liberation Sans, sans-serif">i</text>
<text transform="matrix(0.6956 0 0 0.8996 863.12 123.98)" font-size="30" fill="#ffffff" font-family="Liberation Sans, sans-serif">ş</text>
<text transform="matrix(0.9101 0 0 0.9753 873.87 125.50)" font-size="30" fill="#ffffff" font-family="Liberation Sans, sans-serif">i</text>
<text transform="matrix(0.7516 0 0 0.9911 880.10 125.50)" font-size="30" fill="#ffffff" font-family="Liberation Sans, sans-serif">m</text>
<text x="654.48" y="142.70" font-size="7" fill="#444" font-family="DejaVu Sans, Liberation Sans, sans-serif" font-weight="normal" textLength="243.11" lengthAdjust="spacingAndGlyphs" >OSMAN KAVUNCU MAH. OSMAN KAVUNCU BUL. ATILGAN SOK. SEVİNÇ</text>
<text x="714.48" y="150.60" font-size="7" fill="#444" font-family="DejaVu Sans, Liberation Sans, sans-serif" font-weight="normal" textLength="122.91" lengthAdjust="spacingAndGlyphs" >SİT. NO : 12/4 MELİKGAZİ KAYSERİ</text>
<rect x="650.60" y="158.9" width="254.70" height="95.30" fill="none" stroke="#6c6c6c" stroke-width="0.8" stroke-dasharray="2 1"/>
<text x="657.24" y="171.90" font-size="6.2" fill="#262626" font-family="DejaVu Sans, Liberation Sans, sans-serif" font-weight="normal" textLength="115.01" lengthAdjust="spacingAndGlyphs" >KARAMERCAN YAPI MALZEMELERİ AŞ.</text>
<text x="657.24" y="184.80" font-size="6.2" fill="#262626" font-family="DejaVu Sans, Liberation Sans, sans-serif" font-weight="normal" textLength="164.71" lengthAdjust="spacingAndGlyphs" >ŞEKER MAHALLESİ HACIATLI SOKAK NO:62 ÜMRANİYE</text>
<text x="657.24" y="192.90" font-size="6.2" fill="#262626" font-family="DejaVu Sans, Liberation Sans, sans-serif" font-weight="normal" textLength="30.01" lengthAdjust="spacingAndGlyphs" >İSTANBUL</text>
<text x="656.92" y="217.50" font-size="6.4" fill="#262626" font-family="DejaVu Sans, Liberation Sans, sans-serif" font-weight="normal" textLength="52.18" lengthAdjust="spacingAndGlyphs" >VERGİ DAİRESİ</text>
<text x="734.02" y="217.50" font-size="6.4" fill="#262626" font-family="DejaVu Sans, Liberation Sans, sans-serif" font-weight="normal" textLength="35.53" lengthAdjust="spacingAndGlyphs" >ÜMRANİYE</text>
<text x="656.92" y="230.90" font-size="6.4" fill="#262626" font-family="DejaVu Sans, Liberation Sans, sans-serif" font-weight="normal" textLength="60.03" lengthAdjust="spacingAndGlyphs" >VERGİ NUMARASI</text>
<text x="734.32" y="230.90" font-size="6.4" fill="#262626" font-family="DejaVu Sans, Liberation Sans, sans-serif" font-weight="normal" textLength="42.28" lengthAdjust="spacingAndGlyphs" >5222125458</text>
<text x="657.41" y="244.80" font-size="6.5" fill="#262626" font-family="DejaVu Sans, Liberation Sans, sans-serif" font-weight="normal" textLength="183.74" lengthAdjust="spacingAndGlyphs" >-17.357,40 [ TL ] BORÇ BAKİYENİZ BULUNMAKTADIR.</text>
<circle cx="868.80" cy="181.90" r="16.3" fill="none" stroke="#737373" stroke-width="0.75"/>
<circle cx="868.80" cy="181.90" r="7.6" fill="none" stroke="#737373" stroke-width="0.75"/>
<path d="M868.80 198.80 L863.60 205.40 L874.00 205.40 Z" fill="none" stroke="#737373" stroke-width="0.8"/>
<text x="868.80" y="203.80" font-size="3" fill="#888" font-family="Liberation Sans, sans-serif" text-anchor="middle">T</text>
<path id="p868a" d="M859.00 181.90 A9.8 9.8 0 0 1 878.60 181.90" fill="none"/>
<path id="p868b" d="M855.40 181.90 A13.4 13.4 0 0 0 882.20 181.90" fill="none"/>
<text font-size="4.5" fill="#505050" font-family="Liberation Sans, sans-serif" font-weight="bold" text-anchor="middle" letter-spacing="0.5"><textPath href="#p868a" startOffset="50%">MALİYE</textPath></text>
<text font-size="4.3" fill="#505050" font-family="Liberation Sans, sans-serif" font-weight="bold" text-anchor="middle" letter-spacing="0.35"><textPath href="#p868b" startOffset="50%">BAKANLIĞI</textPath></text>
<text x="868.80" y="183.40" font-size="4.9" fill="#333" font-family="Liberation Sans, sans-serif" font-weight="bold" text-anchor="middle" textLength="7.8" lengthAdjust="spacingAndGlyphs">T.C.</text>
<text x="847.40" y="216.10" font-size="6.6" fill="#151515" font-family="DejaVu Sans, Liberation Sans, sans-serif" font-weight="bold" textLength="39.16" lengthAdjust="spacingAndGlyphs" >Belge tarihi</text>
<text x="844.71" y="232.70" font-size="11.9" fill="#1818ff" font-family="Liberation Serif, serif" font-weight="bold" textLength="46.25" lengthAdjust="spacingAndGlyphs" >78458745</text>
<rect x="652.30" y="265.00" width="166.30" height="11.80" fill="#808080" />
<rect x="820.20" y="265.00" width="37.80" height="11.80" fill="#808080" />
<rect x="859.20" y="265.00" width="49.90" height="11.80" fill="#808080" />
<rect x="652.25" y="276.50" width="1.10" height="108.10" fill="#8e8e8e" />
<rect x="820.25" y="276.50" width="1.10" height="108.10" fill="#8e8e8e" />
<rect x="859.35" y="276.50" width="1.10" height="108.10" fill="#8e8e8e" />
<rect x="652.30" y="383.70" width="256.70" height="1.00" fill="#8e8e8e" />
<text x="720.33" y="274.00" font-size="6.2" fill="#fff" font-family="DejaVu Sans, Liberation Sans, sans-serif" font-weight="normal" textLength="29.41" lengthAdjust="spacingAndGlyphs" >STOK ADI</text>
<text x="826.24" y="274.00" font-size="6.2" fill="#fff" font-family="DejaVu Sans, Liberation Sans, sans-serif" font-weight="normal" textLength="23.96" lengthAdjust="spacingAndGlyphs" >MİKTAR</text>
<text x="873.63" y="274.00" font-size="6.2" fill="#fff" font-family="DejaVu Sans, Liberation Sans, sans-serif" font-weight="normal" textLength="20.31" lengthAdjust="spacingAndGlyphs" >TUTAR</text>
<text x="657.27" y="287.40" font-size="7" fill="#262626" font-family="DejaVu Sans, Liberation Sans, sans-serif" font-weight="normal" textLength="145.51" lengthAdjust="spacingAndGlyphs" >NMG-051 SALON KOLTUK TAKIMI 3 PARÇA</text>
<text x="826.88" y="287.40" font-size="7" fill="#262626" font-family="DejaVu Sans, Liberation Sans, sans-serif" font-weight="normal" textLength="4.31" lengthAdjust="spacingAndGlyphs" >1</text>
<text x="834.48" y="287.40" font-size="7" fill="#262626" font-family="DejaVu Sans, Liberation Sans, sans-serif" font-weight="normal" textLength="21.21" lengthAdjust="spacingAndGlyphs" >TAKIM</text>
<text x="876.68" y="287.40" font-size="7" fill="#262626" font-family="DejaVu Sans, Liberation Sans, sans-serif" font-weight="normal" textLength="30.61" lengthAdjust="spacingAndGlyphs" >2.449,15</text>
<text x="657.27" y="302.57" font-size="7" fill="#262626" font-family="DejaVu Sans, Liberation Sans, sans-serif" font-weight="normal" textLength="143.01" lengthAdjust="spacingAndGlyphs" >WARS UK21 TAŞ DESENLİ DUVAR KAĞIDI</text>
<text x="826.88" y="302.57" font-size="7" fill="#262626" font-family="DejaVu Sans, Liberation Sans, sans-serif" font-weight="normal" textLength="4.31" lengthAdjust="spacingAndGlyphs" >1</text>
<text x="834.48" y="302.57" font-size="7" fill="#262626" font-family="DejaVu Sans, Liberation Sans, sans-serif" font-weight="normal" textLength="10.61" lengthAdjust="spacingAndGlyphs" >m²</text>
<text x="888.08" y="302.57" font-size="7" fill="#262626" font-family="DejaVu Sans, Liberation Sans, sans-serif" font-weight="normal" textLength="19.21" lengthAdjust="spacingAndGlyphs" >27,12</text>
<text x="657.27" y="317.74" font-size="7" fill="#262626" font-family="DejaVu Sans, Liberation Sans, sans-serif" font-weight="normal" textLength="113.31" lengthAdjust="spacingAndGlyphs" >DEKORATAN STOR PERDE 180CM</text>
<text x="826.88" y="317.74" font-size="7" fill="#262626" font-family="DejaVu Sans, Liberation Sans, sans-serif" font-weight="normal" textLength="4.31" lengthAdjust="spacingAndGlyphs" >1</text>
<text x="834.48" y="317.74" font-size="7" fill="#262626" font-family="DejaVu Sans, Liberation Sans, sans-serif" font-weight="normal" textLength="10.61" lengthAdjust="spacingAndGlyphs" >m²</text>
<text x="888.08" y="317.74" font-size="7" fill="#262626" font-family="DejaVu Sans, Liberation Sans, sans-serif" font-weight="normal" textLength="19.21" lengthAdjust="spacingAndGlyphs" >44,07</text>
<text x="657.27" y="332.91" font-size="7" fill="#262626" font-family="DejaVu Sans, Liberation Sans, sans-serif" font-weight="normal" textLength="113.31" lengthAdjust="spacingAndGlyphs" >DEKORATAN STOR PERDE 140CM</text>
<text x="826.88" y="332.91" font-size="7" fill="#262626" font-family="DejaVu Sans, Liberation Sans, sans-serif" font-weight="normal" textLength="4.31" lengthAdjust="spacingAndGlyphs" >1</text>
<text x="834.48" y="332.91" font-size="7" fill="#262626" font-family="DejaVu Sans, Liberation Sans, sans-serif" font-weight="normal" textLength="10.61" lengthAdjust="spacingAndGlyphs" >m²</text>
<text x="888.08" y="332.91" font-size="7" fill="#262626" font-family="DejaVu Sans, Liberation Sans, sans-serif" font-weight="normal" textLength="19.21" lengthAdjust="spacingAndGlyphs" >50,00</text>
<text x="657.27" y="348.08" font-size="7" fill="#262626" font-family="DejaVu Sans, Liberation Sans, sans-serif" font-weight="normal" textLength="150.91" lengthAdjust="spacingAndGlyphs" >WARS UK21 DESENLİ DUVAR KAĞIDI BEYAZ</text>
<text x="826.88" y="348.08" font-size="7" fill="#262626" font-family="DejaVu Sans, Liberation Sans, sans-serif" font-weight="normal" textLength="4.31" lengthAdjust="spacingAndGlyphs" >1</text>
<text x="834.48" y="348.08" font-size="7" fill="#262626" font-family="DejaVu Sans, Liberation Sans, sans-serif" font-weight="normal" textLength="10.61" lengthAdjust="spacingAndGlyphs" >m²</text>
<text x="888.08" y="348.08" font-size="7" fill="#262626" font-family="DejaVu Sans, Liberation Sans, sans-serif" font-weight="normal" textLength="19.21" lengthAdjust="spacingAndGlyphs" >13,56</text>
<text x="657.27" y="363.25" font-size="7" fill="#262626" font-family="DejaVu Sans, Liberation Sans, sans-serif" font-weight="normal" textLength="113.31" lengthAdjust="spacingAndGlyphs" >DEKORATAN STOR PERDE 120CM</text>
<text x="826.88" y="363.25" font-size="7" fill="#262626" font-family="DejaVu Sans, Liberation Sans, sans-serif" font-weight="normal" textLength="4.31" lengthAdjust="spacingAndGlyphs" >1</text>
<text x="834.48" y="363.25" font-size="7" fill="#262626" font-family="DejaVu Sans, Liberation Sans, sans-serif" font-weight="normal" textLength="10.61" lengthAdjust="spacingAndGlyphs" >m²</text>
<text x="888.08" y="363.25" font-size="7" fill="#262626" font-family="DejaVu Sans, Liberation Sans, sans-serif" font-weight="normal" textLength="19.21" lengthAdjust="spacingAndGlyphs" >42,37</text>
<text x="657.27" y="378.42" font-size="7" fill="#262626" font-family="DejaVu Sans, Liberation Sans, sans-serif" font-weight="normal" textLength="102.01" lengthAdjust="spacingAndGlyphs" >NMG-051 ORTA SEHBA BEYAZ</text>
<text x="826.88" y="378.42" font-size="7" fill="#262626" font-family="DejaVu Sans, Liberation Sans, sans-serif" font-weight="normal" textLength="4.31" lengthAdjust="spacingAndGlyphs" >1</text>
<text x="834.48" y="378.42" font-size="7" fill="#262626" font-family="DejaVu Sans, Liberation Sans, sans-serif" font-weight="normal" textLength="21.21" lengthAdjust="spacingAndGlyphs" >TAKIM</text>
<text x="876.68" y="378.42" font-size="7" fill="#262626" font-family="DejaVu Sans, Liberation Sans, sans-serif" font-weight="normal" textLength="30.61" lengthAdjust="spacingAndGlyphs" >2.449,15</text>
<rect x="657.90" y="399.00" width="1.41" height="24.20" fill="#000" opacity="0.45"/>
<rect x="659.59" y="399.00" width="0.94" height="24.20" fill="#000" opacity="0.55"/>
<rect x="662.98" y="399.00" width="1.88" height="24.20" fill="#000" opacity="0.45"/>
<rect x="664.86" y="399.00" width="2.07" height="24.20" fill="#000" opacity="0.9"/>
<rect x="667.68" y="399.00" width="2.07" height="24.20" fill="#000" opacity="1"/>
<rect x="670.68" y="399.00" width="1.41" height="24.20" fill="#000" opacity="0.5"/>
<rect x="672.09" y="399.00" width="1.60" height="24.20" fill="#000" opacity="0.9"/>
<rect x="674.63" y="399.00" width="0.94" height="24.20" fill="#000" opacity="0.45"/>
<rect x="677.73" y="399.00" width="1.22" height="24.20" fill="#000" opacity="0.75"/>
<rect x="679.33" y="399.00" width="1.50" height="24.20" fill="#000" opacity="1"/>
<rect x="681.77" y="399.00" width="1.88" height="24.20" fill="#000" opacity="0.6"/>
<rect x="683.84" y="399.00" width="2.07" height="24.20" fill="#000" opacity="1"/>
<rect x="686.85" y="399.00" width="0.75" height="24.20" fill="#000" opacity="0.5"/>
<rect x="688.73" y="399.00" width="2.16" height="24.20" fill="#000" opacity="1"/>
<rect x="690.89" y="399.00" width="1.88" height="24.20" fill="#000" opacity="0.55"/>
<rect x="693.71" y="399.00" width="1.13" height="24.20" fill="#000" opacity="0.8"/>
<rect x="696.06" y="399.00" width="0.94" height="24.20" fill="#000" opacity="0.45"/>
<rect x="699.35" y="399.00" width="2.54" height="24.20" fill="#000" opacity="1"/>
<rect x="703.58" y="399.00" width="2.35" height="24.20" fill="#000" opacity="1"/>
<rect x="706.87" y="399.00" width="3.01" height="24.20" fill="#000" opacity="0.6"/>
<rect x="712.04" y="399.00" width="2.82" height="24.20" fill="#000" opacity="1"/>
<rect x="714.86" y="399.00" width="1.88" height="24.20" fill="#000" opacity="0.45"/>
<rect x="717.96" y="399.00" width="1.60" height="24.20" fill="#000" opacity="0.8"/>
<rect x="719.56" y="399.00" width="1.88" height="24.20" fill="#000" opacity="0.45"/>
<rect x="721.44" y="399.00" width="2.35" height="24.20" fill="#000" opacity="1"/>
<rect x="726.89" y="399.00" width="2.07" height="24.20" fill="#000" opacity="1"/>
<rect x="729.71" y="399.00" width="1.13" height="24.20" fill="#000" opacity="0.8"/>
<rect x="732.25" y="399.00" width="1.22" height="24.20" fill="#000" opacity="0.45"/>
<rect x="733.85" y="399.00" width="2.16" height="24.20" fill="#000" opacity="1"/>
<rect x="736.95" y="399.00" width="2.35" height="24.20" fill="#000" opacity="0.85"/>
<rect x="770.00" y="394.40" width="71.10" height="14.00" fill="#808080" />
<rect x="770.00" y="407.50" width="142.20" height="1.00" fill="#8e8e8e" />
<text x="771.51" y="403.10" font-size="6.5" fill="#fff" font-family="DejaVu Sans, Liberation Sans, sans-serif" font-weight="bold" textLength="52.89" lengthAdjust="spacingAndGlyphs" >BÜRÜT TOPLAM</text>
<text x="876.48" y="403.10" font-size="7" fill="#151515" font-family="DejaVu Sans, Liberation Sans, sans-serif" font-weight="bold" textLength="33.71" lengthAdjust="spacingAndGlyphs" >5.075,42</text>
<rect x="770.00" y="411.30" width="71.10" height="13.90" fill="#808080" />
<rect x="770.00" y="424.30" width="142.20" height="1.00" fill="#8e8e8e" />
<text x="771.51" y="421.00" font-size="6.5" fill="#fff" font-family="DejaVu Sans, Liberation Sans, sans-serif" font-weight="bold" textLength="44.14" lengthAdjust="spacingAndGlyphs" >KDV TOPLAM</text>
<text x="883.98" y="420.00" font-size="7" fill="#151515" font-family="DejaVu Sans, Liberation Sans, sans-serif" font-weight="bold" textLength="26.21" lengthAdjust="spacingAndGlyphs" >913,58</text>
<rect x="770.00" y="428.10" width="71.10" height="13.70" fill="#808080" />
<rect x="770.00" y="440.90" width="142.20" height="1.00" fill="#8e8e8e" />
<text x="771.51" y="437.80" font-size="6.5" fill="#fff" font-family="DejaVu Sans, Liberation Sans, sans-serif" font-weight="bold" textLength="52.14" lengthAdjust="spacingAndGlyphs" >GENEL TOPLAM</text>
<text x="876.48" y="437.80" font-size="7" fill="#151515" font-family="DejaVu Sans, Liberation Sans, sans-serif" font-weight="bold" textLength="33.71" lengthAdjust="spacingAndGlyphs" >5.989,00</text>
<text x="725.48" y="458.80" font-size="8.3" fill="#2a2a2a" font-family="Liberation Sans, sans-serif" font-weight="normal" textLength="121.98" lengthAdjust="spacingAndGlyphs" >beşbindokuzyüzseksendokuz TL</text>
<text x="663.27" y="483.30" font-size="6.4" fill="#262626" font-family="DejaVu Sans, Liberation Sans, sans-serif" font-weight="normal" textLength="82.68" lengthAdjust="spacingAndGlyphs" >DÜZENLEYEN PERSONEL</text>
<text x="760.77" y="483.30" font-size="6.4" fill="#262626" font-family="DejaVu Sans, Liberation Sans, sans-serif" font-weight="normal" textLength="60.38" lengthAdjust="spacingAndGlyphs" >: SELMA TONGUÇ</text>
<text x="663.27" y="495.00" font-size="6.4" fill="#262626" font-family="DejaVu Sans, Liberation Sans, sans-serif" font-weight="normal" textLength="60.83" lengthAdjust="spacingAndGlyphs" >BELGE NUMARASI</text>
<text x="760.77" y="495.00" font-size="6.4" fill="#262626" font-family="DejaVu Sans, Liberation Sans, sans-serif" font-weight="normal" textLength="30.58" lengthAdjust="spacingAndGlyphs" >: 125874</text>
<rect x="661.30" y="512.5" width="250.40" height="66.90" fill="none" stroke="#666666" stroke-width="0.85" stroke-dasharray="2 1"/>
<text x="680.53" y="527.00" font-size="6.3" fill="#262626" font-family="DejaVu Sans, Liberation Sans, sans-serif" font-weight="normal" textLength="208.82" lengthAdjust="spacingAndGlyphs" >YAPI KREDİ BANKASI YENİ SANAYİ/KAYSERİ 1002-43293208</text>
<text x="729.53" y="534.90" font-size="6.3" fill="#262626" font-family="DejaVu Sans, Liberation Sans, sans-serif" font-weight="normal" textLength="110.82" lengthAdjust="spacingAndGlyphs" >TR500006701000000043293208</text>
<text x="669.03" y="553.10" font-size="6.3" fill="#262626" font-family="DejaVu Sans, Liberation Sans, sans-serif" font-weight="normal" textLength="231.82" lengthAdjust="spacingAndGlyphs" >İhtiyaçlarınızı en kaliteli bir şekilde çözümleme hedefi sunan Zerogle</text>
<text x="667.93" y="561.00" font-size="6.3" fill="#262626" font-family="DejaVu Sans, Liberation Sans, sans-serif" font-weight="normal" textLength="235.22" lengthAdjust="spacingAndGlyphs" >Bilişim çağın merkezi kurmuştur. Zerogle bilişim çözümlerine farklı bir</text>
<text x="743.53" y="568.80" font-size="6.3" fill="#262626" font-family="DejaVu Sans, Liberation Sans, sans-serif" font-weight="normal" textLength="83.82" lengthAdjust="spacingAndGlyphs" >bakış açısı ile yaklaşıyor.</text>
<rect x="661.00" y="585.50" width="53.80" height="14.00" fill="#808080" />
<rect x="661.00" y="598.50" width="121.80" height="1.00" fill="#6a6a6a" />
<text x="662.31" y="594.20" font-size="6.5" fill="#fff" font-family="DejaVu Sans, Liberation Sans, sans-serif" font-weight="bold" textLength="45.84" lengthAdjust="spacingAndGlyphs" >TESLİM EDEN</text>
<rect x="789.50" y="585.50" width="54.25" height="14.00" fill="#808080" />
<rect x="789.50" y="598.50" width="122.20" height="1.00" fill="#6a6a6a" />
<text x="791.01" y="594.20" font-size="6.5" fill="#fff" font-family="DejaVu Sans, Liberation Sans, sans-serif" font-weight="bold" textLength="45.34" lengthAdjust="spacingAndGlyphs" >TESLİM ALAN</text>
</svg>
</body></html>
